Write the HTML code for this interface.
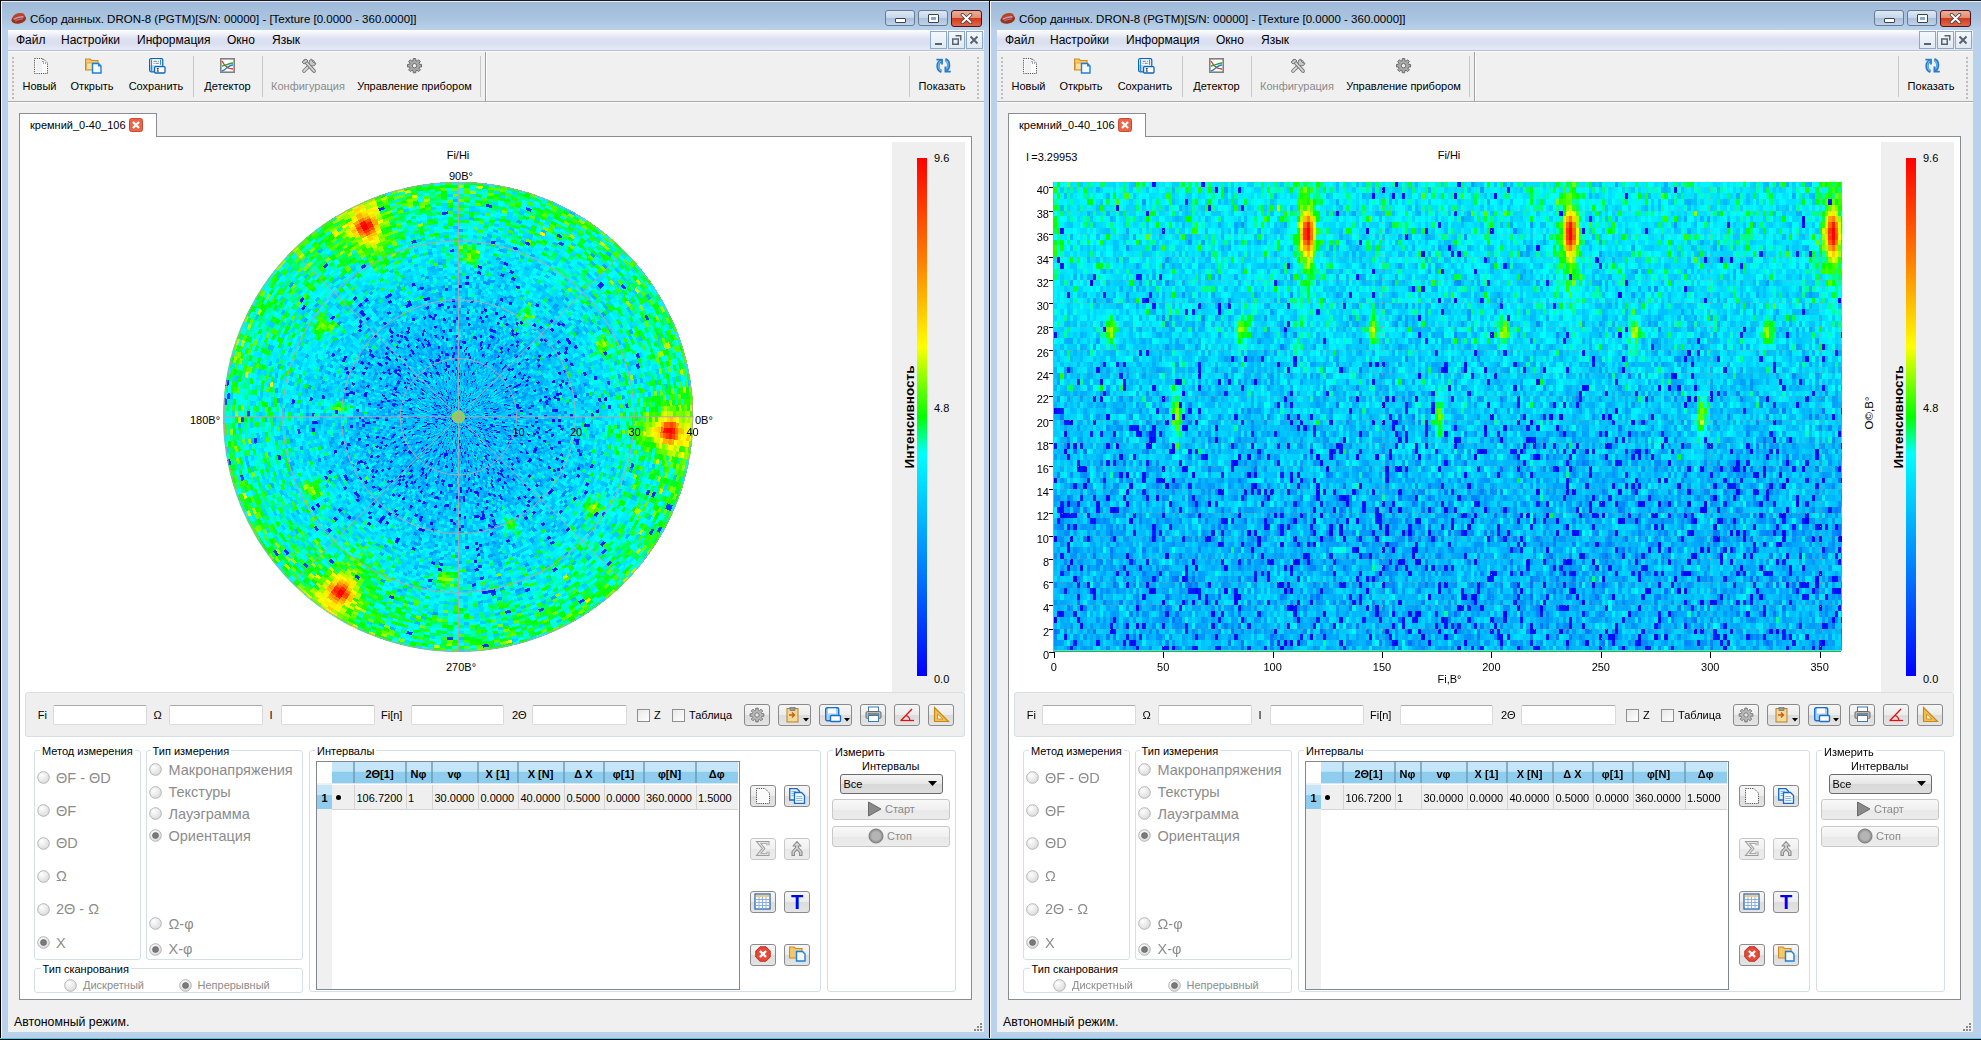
<!DOCTYPE html><html><head><meta charset="utf-8"><style>
*{margin:0;padding:0}
body{width:1981px;height:1040px;overflow:hidden;background:#000;font-family:"Liberation Sans", sans-serif;position:relative}
.win{position:absolute;top:0;width:992px;height:1040px;overflow:hidden}
.a{position:absolute}
.t{position:absolute;white-space:nowrap;line-height:1.15}
</style></head><body><div class="win" style="left:0px;">
<div class="a" style="left:0px;top:0px;width:992px;height:1040px;background:#b9d1ea;"></div>
<div class="a" style="left:0px;top:2px;width:992px;height:28px;background:linear-gradient(#9fbad8,#aac4e0 60%,#b9d1ea);"></div>
<div class="a" style="left:0px;top:0px;width:992px;height:1px;background:#1a1a1a;"></div>
<div class="a" style="left:0px;top:1px;width:992px;height:1px;background:#e8eef6;"></div>
<div class="a" style="left:0px;top:0px;width:1px;height:1040px;background:#000;"></div>
<div class="a" style="left:1px;top:1px;width:1px;height:1038px;background:#f4f8fc;"></div>
<div class="a" style="left:0px;top:1038px;width:992px;height:1px;background:#38d0f0;"></div>
<div class="a" style="left:0px;top:1039px;width:992px;height:1px;background:#000;"></div>
<svg class="a" style="left:10px;top:11px" width="17" height="14" viewBox="0 0 17 14"><g transform="rotate(-12 8.5 7)"><ellipse cx="8.5" cy="8.2" rx="7.4" ry="4.4" fill="#9a3216"/><ellipse cx="9" cy="5.8" rx="6.2" ry="3.6" fill="#b8442a"/><path d="M3.5 7.2 Q8.5 5.6 13.5 6.8" fill="none" stroke="#c8a0c0" stroke-width="1.3"/><path d="M4.5 9.2 Q8.5 8.2 12.5 9" fill="none" stroke="#a87098" stroke-width="1"/></g></svg>
<div class="t" style="left:30px;top:12.5px;font-size:11.5px;color:#000;letter-spacing:0px;">Сбор данных. DRON-8 (PGTM)[S/N: 00000] - [Texture [0.0000 - 360.0000]]</div>
<div class="a" style="left:885px;top:10px;width:30px;height:16px;border:1px solid #6a7a94;border-radius:3px;box-sizing:border-box;background:linear-gradient(#dde8f4 0%,#c6d7ea 50%,#a9c0da 51%,#c0d4ea 100%);"></div>
<div class="a" style="left:895px;top:18px;width:11px;height:5px;border:1.5px solid #3c4454;border-radius:1px;background:#fff;box-sizing:border-box;"></div>
<div class="a" style="left:918px;top:10px;width:30px;height:16px;border:1px solid #6a7a94;border-radius:3px;box-sizing:border-box;background:linear-gradient(#dde8f4 0%,#c6d7ea 50%,#a9c0da 51%,#c0d4ea 100%);"></div>
<div class="a" style="left:928px;top:14px;width:11px;height:9px;border:1.5px solid #3c4454;border-radius:1px;background:#fff;box-sizing:border-box;"></div>
<div class="a" style="left:931px;top:17px;width:5px;height:3px;background:#8aa8c8;"></div>
<div class="a" style="left:951px;top:10px;width:31px;height:17px;border:1px solid #50101c;border-radius:3px;box-sizing:border-box;background:linear-gradient(#eab098 0%,#e48e70 45%,#d23a1c 50%,#e06a4c 100%);"></div>
<svg class="a" style="left:960px;top:13px" width="13" height="11" viewBox="0 0 13 11"><path d="M2.5 1.8 L10.5 9.2 M10.5 1.8 L2.5 9.2" stroke="#3a3c48" stroke-width="3.6" stroke-linecap="round"/><path d="M2.5 1.8 L10.5 9.2 M10.5 1.8 L2.5 9.2" stroke="#fff" stroke-width="2" stroke-linecap="round"/></svg>
<div class="a" style="left:8px;top:30px;width:976px;height:1002px;background:#f0f0f0;"></div>
<div class="a" style="left:8px;top:30px;width:976px;height:20px;background:linear-gradient(#fefefe 0,#f6f7fb 12%,#dce0f0 45%,#dadff0 65%,#e6e9f5 100%);"></div>
<div class="a" style="left:8px;top:50px;width:976px;height:1px;background:#b8c0d2;"></div>
<div class="a" style="left:8px;top:51px;width:976px;height:1px;background:#fbfbfb;"></div>
<div class="t" style="left:16px;top:34px;font-size:12px;color:#000;">Файл</div>
<div class="t" style="left:61px;top:34px;font-size:12px;color:#000;">Настройки</div>
<div class="t" style="left:137px;top:34px;font-size:12px;color:#000;">Информация</div>
<div class="t" style="left:227px;top:34px;font-size:12px;color:#000;">Окно</div>
<div class="t" style="left:272px;top:34px;font-size:12px;color:#000;">Язык</div>
<div class="a" style="left:930px;top:31px;width:17px;height:18px;border:1px solid #8fa8c0;box-sizing:border-box;background:linear-gradient(#f4f8fc,#dfe9f4);"></div>
<div class="a" style="left:948px;top:31px;width:17px;height:18px;border:1px solid #8fa8c0;box-sizing:border-box;background:linear-gradient(#f4f8fc,#dfe9f4);"></div>
<div class="a" style="left:966px;top:31px;width:17px;height:18px;border:1px solid #8fa8c0;box-sizing:border-box;background:linear-gradient(#f4f8fc,#dfe9f4);"></div>
<div class="a" style="left:935px;top:43px;width:7px;height:2px;background:#5a6470;"></div>
<svg class="a" style="left:952px;top:35px" width="10" height="10" viewBox="0 0 10 10"><path d="M3.5 0.75 H8.75 V5.5 M0.75 4 H6.25 V9.25 H0.75 Z" fill="none" stroke="#5a6470" stroke-width="1.5"/></svg>
<svg class="a" style="left:969px;top:35px" width="10" height="10" viewBox="0 0 10 10"><path d="M1.5 1.5 L8.5 8.5 M8.5 1.5 L1.5 8.5" stroke="#5a6470" stroke-width="2"/></svg>
<div class="a" style="left:8px;top:52px;width:976px;height:49px;background:#f0f0f0;"></div>
<div class="a" style="left:8px;top:101px;width:976px;height:1px;background:#a9a9a9;"></div>
<div class="a" style="left:8px;top:102px;width:976px;height:1px;background:#fdfdfd;"></div>
<div class="a" style="left:485px;top:52px;width:1px;height:49px;background:#a0a0a0;"></div>
<div class="a" style="left:486px;top:52px;width:1px;height:49px;background:#fff;"></div>
<div class="a" style="left:12px;top:57px;width:2px;height:2px;background:#bdbdbd;"></div>
<div class="a" style="left:977px;top:57px;width:2px;height:2px;background:#bdbdbd;"></div>
<div class="a" style="left:12px;top:61px;width:2px;height:2px;background:#bdbdbd;"></div>
<div class="a" style="left:977px;top:61px;width:2px;height:2px;background:#bdbdbd;"></div>
<div class="a" style="left:12px;top:65px;width:2px;height:2px;background:#bdbdbd;"></div>
<div class="a" style="left:977px;top:65px;width:2px;height:2px;background:#bdbdbd;"></div>
<div class="a" style="left:12px;top:69px;width:2px;height:2px;background:#bdbdbd;"></div>
<div class="a" style="left:977px;top:69px;width:2px;height:2px;background:#bdbdbd;"></div>
<div class="a" style="left:12px;top:73px;width:2px;height:2px;background:#bdbdbd;"></div>
<div class="a" style="left:977px;top:73px;width:2px;height:2px;background:#bdbdbd;"></div>
<div class="a" style="left:12px;top:77px;width:2px;height:2px;background:#bdbdbd;"></div>
<div class="a" style="left:977px;top:77px;width:2px;height:2px;background:#bdbdbd;"></div>
<div class="a" style="left:12px;top:81px;width:2px;height:2px;background:#bdbdbd;"></div>
<div class="a" style="left:977px;top:81px;width:2px;height:2px;background:#bdbdbd;"></div>
<div class="a" style="left:12px;top:85px;width:2px;height:2px;background:#bdbdbd;"></div>
<div class="a" style="left:977px;top:85px;width:2px;height:2px;background:#bdbdbd;"></div>
<div class="a" style="left:12px;top:89px;width:2px;height:2px;background:#bdbdbd;"></div>
<div class="a" style="left:977px;top:89px;width:2px;height:2px;background:#bdbdbd;"></div>
<div class="a" style="left:12px;top:93px;width:2px;height:2px;background:#bdbdbd;"></div>
<div class="a" style="left:977px;top:93px;width:2px;height:2px;background:#bdbdbd;"></div>
<div class="a" style="left:12px;top:97px;width:2px;height:2px;background:#bdbdbd;"></div>
<div class="a" style="left:977px;top:97px;width:2px;height:2px;background:#bdbdbd;"></div>
<div class="a" style="left:193px;top:56px;width:1px;height:41px;background:#c8c8c8;"></div>
<div class="a" style="left:262px;top:56px;width:1px;height:41px;background:#c8c8c8;"></div>
<div class="a" style="left:480px;top:56px;width:1px;height:41px;background:#c8c8c8;"></div>
<div class="a" style="left:909px;top:56px;width:1px;height:41px;background:#c8c8c8;"></div>
<div class="t" style="left:-160.5px;width:400px;text-align:center;top:80px;font-size:11px;color:#000;">Новый</div>
<div class="t" style="left:-108px;width:400px;text-align:center;top:80px;font-size:11px;color:#000;">Открыть</div>
<div class="t" style="left:-44px;width:400px;text-align:center;top:80px;font-size:11px;color:#000;">Сохранить</div>
<div class="t" style="left:27.5px;width:400px;text-align:center;top:80px;font-size:11px;color:#000;">Детектор</div>
<div class="t" style="left:108px;width:400px;text-align:center;top:80px;font-size:11px;color:#8a8a8a;">Конфигурация</div>
<div class="t" style="left:214.5px;width:400px;text-align:center;top:80px;font-size:11px;color:#000;">Управление прибором</div>
<div class="t" style="left:742px;width:400px;text-align:center;top:80px;font-size:11px;color:#000;">Показать</div>
<svg class="a" style="left:34px;top:58px" width="14" height="16" viewBox="0 0 14 16"><path d="M0.5 0.5 H9 L13.5 5 V15.5 H0.5 Z" fill="#fbfbfb" stroke="#555" stroke-width="1" stroke-dasharray="1.2 1"/><rect x="2" y="2" width="6" height="12" fill="#e8ecf0" opacity="0.6"/><path d="M9 1 V5 H13" fill="none" stroke="#555" stroke-width="1" stroke-dasharray="1 1"/></svg><svg class="a" style="left:85px;top:58px" width="17" height="16" viewBox="0 0 17 16"><path d="M0.5 1 H5 L6.5 2.5 H13 V12 H0.5 Z" fill="#f2c86a" stroke="#d08a28" stroke-width="1.2"/><path d="M1.5 5 H12 V11.5 H1.5 Z" fill="#f8e2a0" stroke="#e0a040" stroke-width="0.8"/><path d="M7.5 5.5 H13.5 L16 8 V15 H7.5 Z" fill="#f4f8fc" stroke="#1a80e0" stroke-width="1.4"/><path d="M13 5.5 V8.5 H16" fill="#1a80e0"/></svg><svg class="a" style="left:149px;top:58px" width="17" height="16" viewBox="0 0 17 16"><rect x="0.6" y="0.6" width="13.2" height="13.2" rx="1.5" fill="#b8dcf6" stroke="#0a64b8" stroke-width="1.2"/><rect x="1.6" y="1.3" width="11" height="5.8" fill="#fff"/><path d="M2.6 1.5 V13 M11.4 1.5 V6.8" stroke="#1a80e0" stroke-width="1"/><path d="M4.5 3.3 H7.8 M8.8 3.3 H9.8 M4.5 5.3 H5.6 M6.6 5.3 H9.8" stroke="#555" stroke-width="0.8"/><rect x="5.6" y="8.6" width="10.4" height="6.4" rx="1" fill="#fff" stroke="#0a64b8" stroke-width="1.3"/><path d="M7.8 10.6 H9.8 M8.8 10.6 V13.2 M7.8 13.2 H9.8" stroke="#333" stroke-width="0.9"/></svg><svg class="a" style="left:220px;top:58px" width="15" height="15" viewBox="0 0 15 15"><rect x="0.8" y="0.8" width="13.4" height="13.4" fill="#fff" stroke="#808080" stroke-width="1.6"/><path d="M2 3 C5 9 8 11 13 11" fill="none" stroke="#e03020" stroke-width="1.3"/><path d="M2 8 C6 8 8 5 13 5" fill="none" stroke="#30a030" stroke-width="1.3"/><path d="M2 13 C6 12 8 7 13 7" fill="none" stroke="#2080d0" stroke-width="1.3"/></svg><svg class="a" style="left:301px;top:58px" width="16" height="16" viewBox="0 0 16 16"><path d="M3 13 L12 4" stroke="#7a7a7a" stroke-width="3.8" stroke-linecap="round"/><path d="M3 13 L12 4" stroke="#d8d8d8" stroke-width="1.8" stroke-linecap="round"/><path d="M4 3 L13 13" stroke="#7a7a7a" stroke-width="3.8" stroke-linecap="round"/><path d="M4 3 L13 13" stroke="#d8d8d8" stroke-width="1.8" stroke-linecap="round"/><path d="M1 4 L5 1 L7 3 L3 6 Z" fill="#c8c8c8" stroke="#7a7a7a"/><path d="M11 1 A3.5 3.5 0 1 0 15 5 L13 5 L11 3 Z" fill="#c8c8c8" stroke="#7a7a7a"/></svg><svg class="a" style="left:407px;top:58px" width="16" height="16" viewBox="0 0 16 16"><polygon points="12.51,6.31 14.59,6.46 14.59,8.94 12.51,9.09 12.02,10.26 13.39,11.84 11.64,13.59 10.06,12.22 8.89,12.71 8.74,14.79 6.26,14.79 6.11,12.71 4.94,12.22 3.36,13.59 1.61,11.84 2.98,10.26 2.49,9.09 0.41,8.94 0.41,6.46 2.49,6.31 2.98,5.14 1.61,3.56 3.36,1.81 4.94,3.18 6.11,2.69 6.26,0.61 8.74,0.61 8.89,2.69 10.06,3.18 11.64,1.81 13.39,3.56 12.02,5.14" fill="#a8a8a8" stroke="#6a6a6a" stroke-width="1"/><circle cx="7.5" cy="7.7" r="2.2" fill="#f0f0f0" stroke="#6a6a6a" stroke-width="1"/></svg><svg class="a" style="left:935px;top:57px" width="17" height="17" viewBox="0 0 17 17"><path d="M6.2 4 C1.8 5.5, 1.8 12.8, 6.6 14.6" fill="none" stroke="#2a7cc8" stroke-width="3.2"/><path d="M6.2 4 C2.6 5.5, 2.6 12.3, 6.6 13.8" fill="none" stroke="#6ab8f0" stroke-width="1.2"/><path d="M1.4 2.6 H7 V7.6" fill="none" stroke="#2a7cc8" stroke-width="1.8"/><path d="M10.2 2.6 C14.6 4, 15 11.5, 10.6 13.4" fill="none" stroke="#2a7cc8" stroke-width="3.2"/><path d="M10.2 3.4 C13.8 4.6, 14.2 11, 10.6 12.6" fill="none" stroke="#6ab8f0" stroke-width="1.2"/><path d="M10.4 9.6 V14.6 H15.8" fill="none" stroke="#2a7cc8" stroke-width="1.8"/></svg>
<div class="a" style="left:19px;top:113px;width:138px;height:24px;background:#fff;border:1px solid #898c95;border-bottom:none;box-sizing:border-box;"></div>
<div class="t" style="left:30px;top:119px;font-size:11px;color:#000;">кремний_0-40_106</div>
<svg class="a" style="left:129px;top:118px" width="14" height="14" viewBox="0 0 14 14"><rect x="0.5" y="0.5" width="13" height="13" rx="2" fill="#e8674a" stroke="#c84a30"/><path d="M4 4 L10 10 M10 4 L4 10" stroke="#fff" stroke-width="2.2"/></svg>
<div class="a" style="left:19px;top:136px;width:953px;height:864px;background:#fff;border:1px solid #898c95;box-sizing:border-box;"></div>
<div class="a" style="left:20px;top:136px;width:136px;height:1px;background:#fff;"></div>
<div class="a" style="left:892px;top:142px;width:73px;height:550px;background:#efefef;"></div>
<div class="a" style="left:917px;top:158px;width:10px;height:518px;background:linear-gradient(to top,#0000ff 0%,#0080ff 21%,#00ffff 43%,#00ff00 50%,#ffff00 63.5%,#ff8000 80%,#ff0000 100%);"></div>
<div class="t" style="left:934px;top:150.5px;font-size:11px;line-height:14px;color:#000;">9.6</div>
<div class="t" style="left:934px;top:401.0px;font-size:11px;line-height:14px;color:#000;">4.8</div>
<div class="t" style="left:934px;top:672.0px;font-size:11px;line-height:14px;color:#000;">0.0</div>
<div class="t" style="left:850px;top:410px;width:120px;text-align:center;font-size:13.5px;line-height:14px;font-weight:bold;transform:rotate(-90deg);">Интенсивность</div>
<div class="t" style="left:308px;width:300px;text-align:center;top:148.0px;font-size:11px;line-height:14px;color:#000;">Fi/Hi</div>
<div class="t" style="left:449px;top:169.0px;font-size:11px;line-height:14px;color:#000;">90В°</div>
<div class="t" style="left:190px;top:412.5px;font-size:11px;line-height:14px;color:#000;">180В°</div>
<div class="t" style="left:695px;top:413.0px;font-size:11px;line-height:14px;color:#000;">0В°</div>
<div class="t" style="left:446px;top:660.0px;font-size:11px;line-height:14px;color:#000;">270В°</div>
<div class="a" style="left:223.39999999999998px;top:181.8px;width:470px;height:470px;border-radius:50%;background:radial-gradient(circle closest-side,rgb(40,200,120) 0,rgb(6,162,251) 4%,rgb(3,164,253) 35%,rgb(2,193,245) 55%,rgb(8,227,199) 78%,rgb(40,232,160) 100%);"></div>
<div class="a" style="left:343px;top:206px;width:44px;height:44px;border-radius:50%;background:radial-gradient(circle closest-side,#ff2000 0,#ff8000 35%,#f0f000 60%,rgba(80,240,80,0.6) 80%,rgba(80,240,80,0) 100%);"></div>
<div class="a" style="left:645px;top:409px;width:44px;height:44px;border-radius:50%;background:radial-gradient(circle closest-side,#ff2000 0,#ff8000 35%,#f0f000 60%,rgba(80,240,80,0.6) 80%,rgba(80,240,80,0) 100%);"></div>
<div class="a" style="left:319px;top:570px;width:44px;height:44px;border-radius:50%;background:radial-gradient(circle closest-side,#ff2000 0,#ff8000 35%,#f0f000 60%,rgba(80,240,80,0.6) 80%,rgba(80,240,80,0) 100%);"></div>
<canvas id="cpolar" class="a" style="left:218px;top:177px" width="481" height="481"></canvas>
<svg class="a" style="left:218px;top:177px" width="481" height="481"><circle cx="240.39999999999998" cy="239.8" r="58.25" fill="none" stroke="#b2a6ac" stroke-width="1"/><circle cx="240.39999999999998" cy="239.8" r="117.0" fill="none" stroke="#b2a6ac" stroke-width="1"/><circle cx="240.39999999999998" cy="239.8" r="175.75" fill="none" stroke="#b2a6ac" stroke-width="1"/><circle cx="240.39999999999998" cy="239.8" r="234.5" fill="none" stroke="#b2a6ac" stroke-width="1"/><line x1="240.39999999999998" y1="239.8" x2="475.40" y2="239.80" stroke="#b2a6ac" stroke-width="1"/><line x1="240.39999999999998" y1="239.8" x2="406.57" y2="73.63" stroke="#b2a6ac" stroke-width="1"/><line x1="240.39999999999998" y1="239.8" x2="240.40" y2="4.80" stroke="#b2a6ac" stroke-width="1"/><line x1="240.39999999999998" y1="239.8" x2="74.23" y2="73.63" stroke="#b2a6ac" stroke-width="1"/><line x1="240.39999999999998" y1="239.8" x2="5.40" y2="239.80" stroke="#b2a6ac" stroke-width="1"/><line x1="240.39999999999998" y1="239.8" x2="74.23" y2="405.97" stroke="#b2a6ac" stroke-width="1"/><line x1="240.39999999999998" y1="239.8" x2="240.40" y2="474.80" stroke="#b2a6ac" stroke-width="1"/><line x1="240.39999999999998" y1="239.8" x2="406.57" y2="405.97" stroke="#b2a6ac" stroke-width="1"/></svg>
<div class="t" style="left:512.5px;top:425.0px;font-size:11px;line-height:14px;color:#000;">10</div>
<div class="t" style="left:570px;top:425.0px;font-size:11px;line-height:14px;color:#000;">20</div>
<div class="t" style="left:628.5px;top:425.0px;font-size:11px;line-height:14px;color:#000;">30</div>
<div class="t" style="left:686.5px;top:425.0px;font-size:11px;line-height:14px;color:#000;">40</div>
<div class="a" style="left:25px;top:692px;width:940px;height:45px;background:#efefef;border:1px solid #d5dfe5;border-radius:3px;box-sizing:border-box;"></div>
<div class="a" style="left:52.8px;top:705px;width:94.50000000000001px;height:19.5px;background:#fff;border:1px solid #dadada;border-top-color:#a8a8a8;border-radius:2px;box-sizing:border-box;"></div>
<div class="a" style="left:168.7px;top:705px;width:94.30000000000001px;height:19.5px;background:#fff;border:1px solid #dadada;border-top-color:#a8a8a8;border-radius:2px;box-sizing:border-box;"></div>
<div class="a" style="left:280.7px;top:705px;width:94.60000000000002px;height:19.5px;background:#fff;border:1px solid #dadada;border-top-color:#a8a8a8;border-radius:2px;box-sizing:border-box;"></div>
<div class="a" style="left:410.6px;top:705px;width:93.39999999999998px;height:19.5px;background:#fff;border:1px solid #dadada;border-top-color:#a8a8a8;border-radius:2px;box-sizing:border-box;"></div>
<div class="a" style="left:532px;top:705px;width:95.39999999999998px;height:19.5px;background:#fff;border:1px solid #dadada;border-top-color:#a8a8a8;border-radius:2px;box-sizing:border-box;"></div>
<div class="t" style="left:37.7px;top:708.0px;font-size:11px;line-height:14px;color:#000;">Fi</div>
<div class="t" style="left:153.5px;top:708.0px;font-size:11px;line-height:14px;color:#000;">Ω</div>
<div class="t" style="left:269.5px;top:708.0px;font-size:11px;line-height:14px;color:#000;">I</div>
<div class="t" style="left:381px;top:708.0px;font-size:11px;line-height:14px;color:#000;">Fi[n]</div>
<div class="t" style="left:512px;top:708.0px;font-size:11px;line-height:14px;color:#000;">2Θ</div>
<div class="t" style="left:654px;top:708.0px;font-size:11px;line-height:14px;color:#000;">Z</div>
<div class="t" style="left:689px;top:708.0px;font-size:11px;line-height:14px;color:#000;">Таблица</div>
<div class="a" style="left:637px;top:708.5px;width:13px;height:13px;background:linear-gradient(135deg,#e8e8e8,#fff);border:1px solid #8e8f8f;box-sizing:border-box;"></div>
<div class="a" style="left:672px;top:708.5px;width:13px;height:13px;background:linear-gradient(135deg,#e8e8e8,#fff);border:1px solid #8e8f8f;box-sizing:border-box;"></div>
<div class="a" style="left:743.6px;top:704px;width:26.0px;height:22px;border:1px solid #8a8a8a;border-radius:3px;box-sizing:border-box;background:linear-gradient(#f6f6f6,#ececec 50%,#dcdcdc 51%,#e4e4e4);"></div>
<div class="a" style="left:778px;top:704px;width:33px;height:22px;border:1px solid #8a8a8a;border-radius:3px;box-sizing:border-box;background:linear-gradient(#f6f6f6,#ececec 50%,#dcdcdc 51%,#e4e4e4);"></div>
<div class="a" style="left:819px;top:704px;width:33px;height:22px;border:1px solid #8a8a8a;border-radius:3px;box-sizing:border-box;background:linear-gradient(#f6f6f6,#ececec 50%,#dcdcdc 51%,#e4e4e4);"></div>
<div class="a" style="left:860px;top:704px;width:26px;height:22px;border:1px solid #8a8a8a;border-radius:3px;box-sizing:border-box;background:linear-gradient(#f6f6f6,#ececec 50%,#dcdcdc 51%,#e4e4e4);"></div>
<div class="a" style="left:894px;top:704px;width:26px;height:22px;border:1px solid #8a8a8a;border-radius:3px;box-sizing:border-box;background:linear-gradient(#f6f6f6,#ececec 50%,#dcdcdc 51%,#e4e4e4);"></div>
<div class="a" style="left:928px;top:704px;width:26px;height:22px;border:1px solid #8a8a8a;border-radius:3px;box-sizing:border-box;background:linear-gradient(#f6f6f6,#ececec 50%,#dcdcdc 51%,#e4e4e4);"></div>
<svg class="a" style="left:749px;top:707px" width="16" height="16" viewBox="0 0 16 16"><polygon points="12.82,6.67 14.90,6.80 14.90,9.20 12.82,9.33 12.35,10.46 13.73,12.03 12.03,13.73 10.46,12.35 9.33,12.82 9.20,14.90 6.80,14.90 6.67,12.82 5.54,12.35 3.97,13.73 2.27,12.03 3.65,10.46 3.18,9.33 1.10,9.20 1.10,6.80 3.18,6.67 3.65,5.54 2.27,3.97 3.97,2.27 5.54,3.65 6.67,3.18 6.80,1.10 9.20,1.10 9.33,3.18 10.46,3.65 12.03,2.27 13.73,3.97 12.35,5.54" fill="#b8b8b8" stroke="#7a7a7a" stroke-width="1"/><circle cx="8" cy="8" r="2.2" fill="#e8e8e8" stroke="#7a7a7a" stroke-width="1"/></svg>
<svg class="a" style="left:785px;top:707px" width="16" height="16" viewBox="0 0 16 16"><rect x="2" y="1.5" width="11" height="13.5" fill="#f2d89a" stroke="#b8822a"/><rect x="5" y="0.5" width="5" height="3" fill="#999" stroke="#666" stroke-width="0.6"/><path d="M4 8 H9 M7 5.5 L9.5 8 L7 10.5" stroke="#c86010" stroke-width="1.4" fill="none"/></svg>
<svg class="a" style="left:803px;top:718px" width="6" height="4" viewBox="0 0 6 4"><path d="M0 0 H6 L3 3.5 Z" fill="#000"/></svg>
<svg class="a" style="left:825px;top:707px" width="17" height="16" viewBox="0 0 17 16"><rect x="0.7" y="0.7" width="13" height="13" rx="1.5" fill="#a8d0f4" stroke="#1870c8" stroke-width="1.4"/><rect x="3" y="1.5" width="8" height="5" fill="#fff"/><rect x="5.5" y="8.5" width="10" height="6" rx="1" fill="#fff" stroke="#1870c8" stroke-width="1.4"/></svg>
<svg class="a" style="left:844px;top:718px" width="6" height="4" viewBox="0 0 6 4"><path d="M0 0 H6 L3 3.5 Z" fill="#000"/></svg>
<svg class="a" style="left:865px;top:706px" width="17" height="17" viewBox="0 0 17 17"><rect x="3.5" y="1" width="10" height="5" fill="#fff" stroke="#3a7ab8"/><rect x="1" y="5.5" width="15" height="7" rx="1.5" fill="#b8b8b8" stroke="#6a6a6a"/><rect x="3.5" y="9.5" width="10" height="6" fill="#fff" stroke="#3a7ab8"/><path d="M3 8 H14" stroke="#555"/></svg>
<svg class="a" style="left:899px;top:707px" width="17" height="16" viewBox="0 0 17 16"><path d="M1.5 13.5 H15" stroke="#e01010" stroke-width="1.3"/><path d="M2 13.5 L13 2" stroke="#e01010" stroke-width="1.3"/><path d="M7 8.5 A6 6 0 0 1 11 13.5" fill="none" stroke="#e01010" stroke-width="1.2"/></svg>
<svg class="a" style="left:933px;top:706px" width="17" height="17" viewBox="0 0 17 17"><path d="M1.5 1.5 L15.5 15.5 H1.5 Z" fill="#f2c050" stroke="#c88818" stroke-width="1.2"/><path d="M4.5 8 L10 13 H4.5 Z" fill="#f0f0f0" stroke="#c88818" stroke-width="0.8"/></svg>
<div class="a" style="left:34px;top:750px;width:107px;height:210px;border:1px solid #d5dfe5;border-radius:3px;box-sizing:border-box;"></div><div class="t" style="left:42px;top:744.0px;font-size:11px;line-height:14px;color:#000;background:#fff;padding:0 2px;margin-left:-2px;">Метод измерения</div>
<div class="a" style="left:146px;top:750px;width:157px;height:210px;border:1px solid #d5dfe5;border-radius:3px;box-sizing:border-box;"></div><div class="t" style="left:152.5px;top:744.0px;font-size:11px;line-height:14px;color:#000;background:#fff;padding:0 2px;margin-left:-2px;">Тип измерения</div>
<div class="a" style="left:34px;top:968px;width:269px;height:25px;border:1px solid #d5dfe5;border-radius:3px;box-sizing:border-box;"></div><div class="t" style="left:42.5px;top:962.0px;font-size:11px;line-height:14px;color:#000;background:#fff;padding:0 2px;margin-left:-2px;">Тип сканрования</div>
<svg class="a" style="left:36.5px;top:771.0px" width="13" height="13" viewBox="0 0 13 13"><defs><radialGradient id="rg" cx="0.35" cy="0.3" r="0.8"><stop offset="0" stop-color="#fff"/><stop offset="1" stop-color="#d8d8d8"/></radialGradient></defs><circle cx="6.5" cy="6.5" r="5.8" fill="url(#rg)" stroke="#b4b4b4" stroke-width="1"/></svg>
<div class="t" style="left:56px;top:770.5px;font-size:14.5px;line-height:14px;color:#8c8c8c;">ΘF - ΘD</div>
<svg class="a" style="left:36.5px;top:804.0px" width="13" height="13" viewBox="0 0 13 13"><defs><radialGradient id="rg" cx="0.35" cy="0.3" r="0.8"><stop offset="0" stop-color="#fff"/><stop offset="1" stop-color="#d8d8d8"/></radialGradient></defs><circle cx="6.5" cy="6.5" r="5.8" fill="url(#rg)" stroke="#b4b4b4" stroke-width="1"/></svg>
<div class="t" style="left:56px;top:803.5px;font-size:14.5px;line-height:14px;color:#8c8c8c;">ΘF</div>
<svg class="a" style="left:36.5px;top:836.5px" width="13" height="13" viewBox="0 0 13 13"><defs><radialGradient id="rg" cx="0.35" cy="0.3" r="0.8"><stop offset="0" stop-color="#fff"/><stop offset="1" stop-color="#d8d8d8"/></radialGradient></defs><circle cx="6.5" cy="6.5" r="5.8" fill="url(#rg)" stroke="#b4b4b4" stroke-width="1"/></svg>
<div class="t" style="left:56px;top:836.0px;font-size:14.5px;line-height:14px;color:#8c8c8c;">ΘD</div>
<svg class="a" style="left:36.5px;top:869.5px" width="13" height="13" viewBox="0 0 13 13"><defs><radialGradient id="rg" cx="0.35" cy="0.3" r="0.8"><stop offset="0" stop-color="#fff"/><stop offset="1" stop-color="#d8d8d8"/></radialGradient></defs><circle cx="6.5" cy="6.5" r="5.8" fill="url(#rg)" stroke="#b4b4b4" stroke-width="1"/></svg>
<div class="t" style="left:56px;top:869.0px;font-size:14.5px;line-height:14px;color:#8c8c8c;">Ω</div>
<svg class="a" style="left:36.5px;top:902.5px" width="13" height="13" viewBox="0 0 13 13"><defs><radialGradient id="rg" cx="0.35" cy="0.3" r="0.8"><stop offset="0" stop-color="#fff"/><stop offset="1" stop-color="#d8d8d8"/></radialGradient></defs><circle cx="6.5" cy="6.5" r="5.8" fill="url(#rg)" stroke="#b4b4b4" stroke-width="1"/></svg>
<div class="t" style="left:56px;top:902.0px;font-size:14.5px;line-height:14px;color:#8c8c8c;">2Θ - Ω</div>
<svg class="a" style="left:36.5px;top:936.0px" width="13" height="13" viewBox="0 0 13 13"><defs><radialGradient id="rg" cx="0.35" cy="0.3" r="0.8"><stop offset="0" stop-color="#fff"/><stop offset="1" stop-color="#d8d8d8"/></radialGradient></defs><circle cx="6.5" cy="6.5" r="5.8" fill="url(#rg)" stroke="#b4b4b4" stroke-width="1"/><circle cx="6.5" cy="6.5" r="3" fill="#7a7a7a" stroke="#5a5a5a" stroke-width="0.6"/></svg>
<div class="t" style="left:56px;top:935.5px;font-size:14.5px;line-height:14px;color:#8c8c8c;">Χ</div>
<svg class="a" style="left:148.5px;top:763.0px" width="13" height="13" viewBox="0 0 13 13"><defs><radialGradient id="rg" cx="0.35" cy="0.3" r="0.8"><stop offset="0" stop-color="#fff"/><stop offset="1" stop-color="#d8d8d8"/></radialGradient></defs><circle cx="6.5" cy="6.5" r="5.8" fill="url(#rg)" stroke="#b4b4b4" stroke-width="1"/></svg>
<div class="t" style="left:168.5px;top:762.5px;font-size:14.5px;line-height:14px;color:#8c8c8c;">Макронапряжения</div>
<svg class="a" style="left:148.5px;top:785.5px" width="13" height="13" viewBox="0 0 13 13"><defs><radialGradient id="rg" cx="0.35" cy="0.3" r="0.8"><stop offset="0" stop-color="#fff"/><stop offset="1" stop-color="#d8d8d8"/></radialGradient></defs><circle cx="6.5" cy="6.5" r="5.8" fill="url(#rg)" stroke="#b4b4b4" stroke-width="1"/></svg>
<div class="t" style="left:168.5px;top:785.0px;font-size:14.5px;line-height:14px;color:#8c8c8c;">Текстуры</div>
<svg class="a" style="left:148.5px;top:807.0px" width="13" height="13" viewBox="0 0 13 13"><defs><radialGradient id="rg" cx="0.35" cy="0.3" r="0.8"><stop offset="0" stop-color="#fff"/><stop offset="1" stop-color="#d8d8d8"/></radialGradient></defs><circle cx="6.5" cy="6.5" r="5.8" fill="url(#rg)" stroke="#b4b4b4" stroke-width="1"/></svg>
<div class="t" style="left:168.5px;top:806.5px;font-size:14.5px;line-height:14px;color:#8c8c8c;">Лауэграмма</div>
<svg class="a" style="left:148.5px;top:829.0px" width="13" height="13" viewBox="0 0 13 13"><defs><radialGradient id="rg" cx="0.35" cy="0.3" r="0.8"><stop offset="0" stop-color="#fff"/><stop offset="1" stop-color="#d8d8d8"/></radialGradient></defs><circle cx="6.5" cy="6.5" r="5.8" fill="url(#rg)" stroke="#b4b4b4" stroke-width="1"/><circle cx="6.5" cy="6.5" r="3" fill="#7a7a7a" stroke="#5a5a5a" stroke-width="0.6"/></svg>
<div class="t" style="left:168.5px;top:828.5px;font-size:14.5px;line-height:14px;color:#8c8c8c;">Ориентация</div>
<svg class="a" style="left:148.5px;top:917.0px" width="13" height="13" viewBox="0 0 13 13"><defs><radialGradient id="rg" cx="0.35" cy="0.3" r="0.8"><stop offset="0" stop-color="#fff"/><stop offset="1" stop-color="#d8d8d8"/></radialGradient></defs><circle cx="6.5" cy="6.5" r="5.8" fill="url(#rg)" stroke="#b4b4b4" stroke-width="1"/></svg>
<div class="t" style="left:168.5px;top:916.5px;font-size:14.5px;line-height:14px;color:#8c8c8c;">Ω-φ</div>
<svg class="a" style="left:148.5px;top:942.5px" width="13" height="13" viewBox="0 0 13 13"><defs><radialGradient id="rg" cx="0.35" cy="0.3" r="0.8"><stop offset="0" stop-color="#fff"/><stop offset="1" stop-color="#d8d8d8"/></radialGradient></defs><circle cx="6.5" cy="6.5" r="5.8" fill="url(#rg)" stroke="#b4b4b4" stroke-width="1"/><circle cx="6.5" cy="6.5" r="3" fill="#7a7a7a" stroke="#5a5a5a" stroke-width="0.6"/></svg>
<div class="t" style="left:168.5px;top:942.0px;font-size:14.5px;line-height:14px;color:#8c8c8c;">Χ-φ</div>
<svg class="a" style="left:63.5px;top:978.5px" width="13" height="13" viewBox="0 0 13 13"><defs><radialGradient id="rg" cx="0.35" cy="0.3" r="0.8"><stop offset="0" stop-color="#fff"/><stop offset="1" stop-color="#d8d8d8"/></radialGradient></defs><circle cx="6.5" cy="6.5" r="5.8" fill="url(#rg)" stroke="#b4b4b4" stroke-width="1"/></svg>
<div class="t" style="left:83px;top:978.0px;font-size:11px;line-height:14px;color:#8c8c8c;">Дискретный</div>
<svg class="a" style="left:178.5px;top:978.5px" width="13" height="13" viewBox="0 0 13 13"><defs><radialGradient id="rg" cx="0.35" cy="0.3" r="0.8"><stop offset="0" stop-color="#fff"/><stop offset="1" stop-color="#d8d8d8"/></radialGradient></defs><circle cx="6.5" cy="6.5" r="5.8" fill="url(#rg)" stroke="#b4b4b4" stroke-width="1"/><circle cx="6.5" cy="6.5" r="3" fill="#7a7a7a" stroke="#5a5a5a" stroke-width="0.6"/></svg>
<div class="t" style="left:197.5px;top:978.0px;font-size:11px;line-height:14px;color:#8c8c8c;">Непрерывный</div>
<div class="a" style="left:309px;top:750px;width:512px;height:242px;border:1px solid #d5dfe5;border-radius:3px;box-sizing:border-box;"></div><div class="t" style="left:317px;top:744.0px;font-size:11px;line-height:14px;color:#000;background:#fff;padding:0 2px;margin-left:-2px;">Интервалы</div>
<div class="a" style="left:316px;top:761px;width:424px;height:229px;background:#fff;border:1px solid #828790;box-sizing:border-box;"></div>
<div class="a" style="left:317px;top:762px;width:15px;height:227px;background:#f0f0f0;"></div>
<div class="a" style="left:317px;top:762px;width:15px;height:21px;background:#fff;"></div>
<div class="a" style="left:332px;top:762px;width:406px;height:21px;background:linear-gradient(#c4e6f8 0,#c4e6f8 45%,#8fcdee 46%,#8fcdee 100%);"></div>
<div class="a" style="left:352.5px;top:762px;width:2px;height:21px;background:#6e9bb8;opacity:0.75;"></div>
<div class="a" style="left:404.5px;top:762px;width:2px;height:21px;background:#6e9bb8;opacity:0.75;"></div>
<div class="a" style="left:430.5px;top:762px;width:2px;height:21px;background:#6e9bb8;opacity:0.75;"></div>
<div class="a" style="left:476.5px;top:762px;width:2px;height:21px;background:#6e9bb8;opacity:0.75;"></div>
<div class="a" style="left:516.5px;top:762px;width:2px;height:21px;background:#6e9bb8;opacity:0.75;"></div>
<div class="a" style="left:562.5px;top:762px;width:2px;height:21px;background:#6e9bb8;opacity:0.75;"></div>
<div class="a" style="left:602.5px;top:762px;width:2px;height:21px;background:#6e9bb8;opacity:0.75;"></div>
<div class="a" style="left:642.5px;top:762px;width:2px;height:21px;background:#6e9bb8;opacity:0.75;"></div>
<div class="a" style="left:694.5px;top:762px;width:2px;height:21px;background:#6e9bb8;opacity:0.75;"></div>
<div class="a" style="left:332px;top:783px;width:406px;height:1px;background:#d8e8f0;"></div>
<div class="t" style="left:229.5px;width:300px;text-align:center;top:767.0px;font-size:11px;line-height:14px;color:#000;font-weight:bold;">2Θ[1]</div>
<div class="t" style="left:268.5px;width:300px;text-align:center;top:767.0px;font-size:11px;line-height:14px;color:#000;font-weight:bold;">Nφ</div>
<div class="t" style="left:304.5px;width:300px;text-align:center;top:767.0px;font-size:11px;line-height:14px;color:#000;font-weight:bold;">vφ</div>
<div class="t" style="left:347.5px;width:300px;text-align:center;top:767.0px;font-size:11px;line-height:14px;color:#000;font-weight:bold;">Χ [1]</div>
<div class="t" style="left:390.5px;width:300px;text-align:center;top:767.0px;font-size:11px;line-height:14px;color:#000;font-weight:bold;">Χ [N]</div>
<div class="t" style="left:433.5px;width:300px;text-align:center;top:767.0px;font-size:11px;line-height:14px;color:#000;font-weight:bold;">Δ Χ</div>
<div class="t" style="left:473.5px;width:300px;text-align:center;top:767.0px;font-size:11px;line-height:14px;color:#000;font-weight:bold;">φ[1]</div>
<div class="t" style="left:519.5px;width:300px;text-align:center;top:767.0px;font-size:11px;line-height:14px;color:#000;font-weight:bold;">φ[N]</div>
<div class="t" style="left:566.75px;width:300px;text-align:center;top:767.0px;font-size:11px;line-height:14px;color:#000;font-weight:bold;">Δφ</div>
<div class="a" style="left:332px;top:785px;width:406px;height:24px;background:#efefef;"></div>
<div class="a" style="left:317px;top:785px;width:15px;height:24px;background:linear-gradient(#c4e6f8 0,#c4e6f8 40%,#8fcdee 41%,#8fcdee 100%);"></div>
<div class="t" style="left:174.5px;width:300px;text-align:center;top:790.5px;font-size:11px;line-height:14px;color:#000;font-weight:bold;">1</div>
<div class="a" style="left:353.5px;top:785px;width:1px;height:24px;background:#d4d4d4;"></div>
<div class="a" style="left:405.5px;top:785px;width:1px;height:24px;background:#d4d4d4;"></div>
<div class="a" style="left:431.5px;top:785px;width:1px;height:24px;background:#d4d4d4;"></div>
<div class="a" style="left:477.5px;top:785px;width:1px;height:24px;background:#d4d4d4;"></div>
<div class="a" style="left:517.5px;top:785px;width:1px;height:24px;background:#d4d4d4;"></div>
<div class="a" style="left:563.5px;top:785px;width:1px;height:24px;background:#d4d4d4;"></div>
<div class="a" style="left:603.5px;top:785px;width:1px;height:24px;background:#d4d4d4;"></div>
<div class="a" style="left:643.5px;top:785px;width:1px;height:24px;background:#d4d4d4;"></div>
<div class="a" style="left:695.5px;top:785px;width:1px;height:24px;background:#d4d4d4;"></div>
<div class="a" style="left:332px;top:808.5px;width:406px;height:1px;background:#d4d4d4;"></div>
<div class="a" style="left:335.5px;top:795px;width:5px;height:5px;background:#000;border-radius:50%;"></div>
<div class="t" style="left:356.5px;top:790.5px;font-size:11px;line-height:14px;color:#000;">106.7200</div>
<div class="t" style="left:408px;top:790.5px;font-size:11px;line-height:14px;color:#000;">1</div>
<div class="t" style="left:434.5px;top:790.5px;font-size:11px;line-height:14px;color:#000;">30.0000</div>
<div class="t" style="left:480.5px;top:790.5px;font-size:11px;line-height:14px;color:#000;">0.0000</div>
<div class="t" style="left:520.5px;top:790.5px;font-size:11px;line-height:14px;color:#000;">40.0000</div>
<div class="t" style="left:566.5px;top:790.5px;font-size:11px;line-height:14px;color:#000;">0.5000</div>
<div class="t" style="left:606.3px;top:790.5px;font-size:11px;line-height:14px;color:#000;">0.0000</div>
<div class="t" style="left:646px;top:790.5px;font-size:11px;line-height:14px;color:#000;">360.0000</div>
<div class="t" style="left:698px;top:790.5px;font-size:11px;line-height:14px;color:#000;">1.5000</div>
<div class="a" style="left:750px;top:785px;width:26px;height:22px;border:1px solid #8a8a8a;border-radius:3px;box-sizing:border-box;background:linear-gradient(#f6f6f6,#ececec 50%,#dcdcdc 51%,#e4e4e4);"></div>
<div class="a" style="left:784px;top:785px;width:26px;height:22px;border:1px solid #8a8a8a;border-radius:3px;box-sizing:border-box;background:linear-gradient(#f6f6f6,#ececec 50%,#dcdcdc 51%,#e4e4e4);"></div>
<div class="a" style="left:750px;top:838px;width:26px;height:22px;border:1px solid #c8c8c8;border-radius:3px;box-sizing:border-box;background:linear-gradient(#f8f8f8,#f0f0f0 50%,#e8e8e8 51%,#ececec);"></div>
<div class="a" style="left:784px;top:838px;width:26px;height:22px;border:1px solid #c8c8c8;border-radius:3px;box-sizing:border-box;background:linear-gradient(#f8f8f8,#f0f0f0 50%,#e8e8e8 51%,#ececec);"></div>
<div class="a" style="left:750px;top:891px;width:26px;height:22px;border:1px solid #8a8a8a;border-radius:3px;box-sizing:border-box;background:linear-gradient(#f6f6f6,#ececec 50%,#dcdcdc 51%,#e4e4e4);"></div>
<div class="a" style="left:784px;top:891px;width:26px;height:22px;border:1px solid #8a8a8a;border-radius:3px;box-sizing:border-box;background:linear-gradient(#f6f6f6,#ececec 50%,#dcdcdc 51%,#e4e4e4);"></div>
<div class="a" style="left:750px;top:944px;width:26px;height:22px;border:1px solid #8a8a8a;border-radius:3px;box-sizing:border-box;background:linear-gradient(#f6f6f6,#ececec 50%,#dcdcdc 51%,#e4e4e4);"></div>
<div class="a" style="left:784px;top:944px;width:26px;height:22px;border:1px solid #8a8a8a;border-radius:3px;box-sizing:border-box;background:linear-gradient(#f6f6f6,#ececec 50%,#dcdcdc 51%,#e4e4e4);"></div>
<svg class="a" style="left:756px;top:788px" width="14" height="16" viewBox="0 0 14 16"><path d="M0.5 0.5 H9 L13.5 5 V15.5 H0.5 Z" fill="#fbfbfb" stroke="#555" stroke-dasharray="1.2 1"/></svg>
<svg class="a" style="left:789px;top:788px" width="17" height="16" viewBox="0 0 17 16"><path d="M0.7 0.7 H8 L10.5 3.2 V12 H0.7 Z" fill="#e8f2fc" stroke="#1a6ac8" stroke-width="1.3"/><path d="M2.5 3.5 H7 M2.5 5.5 H8 M2.5 7.5 H8" stroke="#7ab0e8" stroke-width="0.9"/><path d="M5.5 4.5 H12.5 L15.5 7.5 V15.3 H5.5 Z" fill="#f4f8fc" stroke="#1a6ac8" stroke-width="1.3"/><path d="M7.3 8.5 H13 M7.3 10.5 H13.5 M7.3 12.5 H13.5" stroke="#7ab0e8" stroke-width="0.9"/></svg>
<svg class="a" style="left:755px;top:840px" width="16" height="17" viewBox="0 0 16 17"><path d="M13 5.2 V2.6 H3.6 L8.6 8.5 L3.6 14.4 H13 V11.8" fill="none" stroke="#9c9c9c" stroke-width="3" stroke-linejoin="miter"/><path d="M13 5.2 V2.6 H3.6 L8.6 8.5 L3.6 14.4 H13 V11.8" fill="none" stroke="#e4e4e4" stroke-width="1.1" stroke-linejoin="miter"/></svg>
<svg class="a" style="left:789px;top:840px" width="16" height="17" viewBox="0 0 16 17"><path d="M3 15.5 V11.5 L6.6 7.5 V6 H4 L8 1.5 L12 6 H9.4 V7.5 L13 11.5 V15.5 H10.6 V12.5 L8 9.6 L5.4 12.5 V15.5 Z" fill="#d4d4d4" stroke="#8a8a8a" stroke-width="1.1" stroke-linejoin="round"/></svg>
<svg class="a" style="left:754px;top:893px" width="17" height="17" viewBox="0 0 17 17"><rect x="1" y="1" width="15" height="15" fill="#fff" stroke="#2a6ab8" stroke-width="1.3"/><path d="M1.5 3 H15.5" stroke="#f0b040" stroke-width="1.4"/><path d="M1.5 6.5 H15.5 M1.5 9.5 H15.5 M1.5 12.5 H15.5 M5 4 V15.5 M8.5 4 V15.5 M12 4 V15.5" stroke="#80a8e0" stroke-width="0.9"/></svg>
<div class="t" style="left:647px;width:300px;text-align:center;top:895.0px;font-size:20px;line-height:14px;color:#0000e8;font-weight:bold;">T</div>
<svg class="a" style="left:755px;top:946px" width="16" height="16" viewBox="0 0 16 16"><path d="M5 0.8 H11 L15.2 5 V11 L11 15.2 H5 L0.8 11 V5 Z" fill="#e84a3a" stroke="#b82a20"/><path d="M5 5 L11 11 M11 5 L5 11" stroke="#fff" stroke-width="2.4"/></svg>
<svg class="a" style="left:789px;top:946px" width="17" height="16" viewBox="0 0 17 16"><path d="M0.5 1 H5 L6.5 2.5 H13 V12 H0.5 Z" fill="#f2c86a" stroke="#d08a28" stroke-width="1.2"/><path d="M7.5 5.5 H13.5 L16 8 V15 H7.5 Z" fill="#f4f8fc" stroke="#1a80e0" stroke-width="1.4"/></svg>
<div class="a" style="left:827px;top:750px;width:129px;height:242px;border:1px solid #d5dfe5;border-radius:3px;box-sizing:border-box;"></div><div class="t" style="left:835px;top:744.5px;font-size:11px;line-height:14px;color:#000;background:#fff;padding:0 2px;margin-left:-2px;">Измерить</div>
<div class="t" style="left:740.7px;width:300px;text-align:center;top:758.5px;font-size:11px;line-height:14px;color:#000;">Интервалы</div>
<div class="a" style="left:840px;top:774px;width:103px;height:20px;border:1px solid #6a6a6a;border-radius:3px;box-sizing:border-box;background:linear-gradient(#f6f6f6,#e6e6e6 50%,#d8d8d8 51%,#dedede);"></div>
<div class="t" style="left:843.5px;top:777.0px;font-size:11px;line-height:14px;color:#000;">Все</div>
<svg class="a" style="left:928px;top:781px" width="9" height="6" viewBox="0 0 9 6"><path d="M0 0 H9 L4.5 5 Z" fill="#000"/></svg>
<div class="a" style="left:832px;top:798.5px;width:118px;height:21px;border:1px solid #c8c8c8;border-radius:3px;box-sizing:border-box;background:linear-gradient(#f8f8f8,#f0f0f0 50%,#e8e8e8 51%,#ececec);"></div>
<svg class="a" style="left:867px;top:801px" width="15" height="16" viewBox="0 0 15 16"><path d="M1.5 1 L14 8 L1.5 15 Z" fill="#8a8a8a" stroke="#6a6a6a"/></svg>
<div class="t" style="left:885px;top:802.0px;font-size:11px;line-height:14px;color:#8a8a8a;">Старт</div>
<div class="a" style="left:832px;top:825.5px;width:118px;height:21px;border:1px solid #c8c8c8;border-radius:3px;box-sizing:border-box;background:linear-gradient(#f8f8f8,#f0f0f0 50%,#e8e8e8 51%,#ececec);"></div>
<svg class="a" style="left:868px;top:828px" width="16" height="16" viewBox="0 0 16 16"><circle cx="8" cy="8" r="7" fill="#9a9a9a" stroke="#7a7a7a"/><circle cx="8" cy="8" r="5" fill="#b4b4b4"/></svg>
<div class="t" style="left:887px;top:829.0px;font-size:11px;line-height:14px;color:#8a8a8a;">Стоп</div>
<div class="t" style="left:14px;top:1015px;font-size:12.3px;color:#000;">Автономный режим.</div>
<div class="a" style="left:980px;top:1023px;width:2px;height:2px;background:#8a8a8a;"></div>
<div class="a" style="left:977px;top:1026px;width:2px;height:2px;background:#8a8a8a;"></div>
<div class="a" style="left:980px;top:1026px;width:2px;height:2px;background:#8a8a8a;"></div>
<div class="a" style="left:974px;top:1029px;width:2px;height:2px;background:#8a8a8a;"></div>
<div class="a" style="left:977px;top:1029px;width:2px;height:2px;background:#8a8a8a;"></div>
<div class="a" style="left:980px;top:1029px;width:2px;height:2px;background:#8a8a8a;"></div>
</div><div class="win" style="left:989px;">
<div class="a" style="left:0px;top:0px;width:992px;height:1040px;background:#b9d1ea;"></div>
<div class="a" style="left:0px;top:2px;width:992px;height:28px;background:linear-gradient(#9fbad8,#aac4e0 60%,#b9d1ea);"></div>
<div class="a" style="left:0px;top:0px;width:992px;height:1px;background:#1a1a1a;"></div>
<div class="a" style="left:0px;top:1px;width:992px;height:1px;background:#e8eef6;"></div>
<div class="a" style="left:0px;top:0px;width:1px;height:1040px;background:#000;"></div>
<div class="a" style="left:1px;top:1px;width:1px;height:1038px;background:#f4f8fc;"></div>
<div class="a" style="left:0px;top:1038px;width:992px;height:1px;background:#38d0f0;"></div>
<div class="a" style="left:0px;top:1039px;width:992px;height:1px;background:#000;"></div>
<svg class="a" style="left:10px;top:11px" width="17" height="14" viewBox="0 0 17 14"><g transform="rotate(-12 8.5 7)"><ellipse cx="8.5" cy="8.2" rx="7.4" ry="4.4" fill="#9a3216"/><ellipse cx="9" cy="5.8" rx="6.2" ry="3.6" fill="#b8442a"/><path d="M3.5 7.2 Q8.5 5.6 13.5 6.8" fill="none" stroke="#c8a0c0" stroke-width="1.3"/><path d="M4.5 9.2 Q8.5 8.2 12.5 9" fill="none" stroke="#a87098" stroke-width="1"/></g></svg>
<div class="t" style="left:30px;top:12.5px;font-size:11.5px;color:#000;letter-spacing:0px;">Сбор данных. DRON-8 (PGTM)[S/N: 00000] - [Texture [0.0000 - 360.0000]]</div>
<div class="a" style="left:885px;top:10px;width:30px;height:16px;border:1px solid #6a7a94;border-radius:3px;box-sizing:border-box;background:linear-gradient(#dde8f4 0%,#c6d7ea 50%,#a9c0da 51%,#c0d4ea 100%);"></div>
<div class="a" style="left:895px;top:18px;width:11px;height:5px;border:1.5px solid #3c4454;border-radius:1px;background:#fff;box-sizing:border-box;"></div>
<div class="a" style="left:918px;top:10px;width:30px;height:16px;border:1px solid #6a7a94;border-radius:3px;box-sizing:border-box;background:linear-gradient(#dde8f4 0%,#c6d7ea 50%,#a9c0da 51%,#c0d4ea 100%);"></div>
<div class="a" style="left:928px;top:14px;width:11px;height:9px;border:1.5px solid #3c4454;border-radius:1px;background:#fff;box-sizing:border-box;"></div>
<div class="a" style="left:931px;top:17px;width:5px;height:3px;background:#8aa8c8;"></div>
<div class="a" style="left:951px;top:10px;width:31px;height:17px;border:1px solid #50101c;border-radius:3px;box-sizing:border-box;background:linear-gradient(#eab098 0%,#e48e70 45%,#d23a1c 50%,#e06a4c 100%);"></div>
<svg class="a" style="left:960px;top:13px" width="13" height="11" viewBox="0 0 13 11"><path d="M2.5 1.8 L10.5 9.2 M10.5 1.8 L2.5 9.2" stroke="#3a3c48" stroke-width="3.6" stroke-linecap="round"/><path d="M2.5 1.8 L10.5 9.2 M10.5 1.8 L2.5 9.2" stroke="#fff" stroke-width="2" stroke-linecap="round"/></svg>
<div class="a" style="left:8px;top:30px;width:976px;height:1002px;background:#f0f0f0;"></div>
<div class="a" style="left:8px;top:30px;width:976px;height:20px;background:linear-gradient(#fefefe 0,#f6f7fb 12%,#dce0f0 45%,#dadff0 65%,#e6e9f5 100%);"></div>
<div class="a" style="left:8px;top:50px;width:976px;height:1px;background:#b8c0d2;"></div>
<div class="a" style="left:8px;top:51px;width:976px;height:1px;background:#fbfbfb;"></div>
<div class="t" style="left:16px;top:34px;font-size:12px;color:#000;">Файл</div>
<div class="t" style="left:61px;top:34px;font-size:12px;color:#000;">Настройки</div>
<div class="t" style="left:137px;top:34px;font-size:12px;color:#000;">Информация</div>
<div class="t" style="left:227px;top:34px;font-size:12px;color:#000;">Окно</div>
<div class="t" style="left:272px;top:34px;font-size:12px;color:#000;">Язык</div>
<div class="a" style="left:930px;top:31px;width:17px;height:18px;border:1px solid #8fa8c0;box-sizing:border-box;background:linear-gradient(#f4f8fc,#dfe9f4);"></div>
<div class="a" style="left:948px;top:31px;width:17px;height:18px;border:1px solid #8fa8c0;box-sizing:border-box;background:linear-gradient(#f4f8fc,#dfe9f4);"></div>
<div class="a" style="left:966px;top:31px;width:17px;height:18px;border:1px solid #8fa8c0;box-sizing:border-box;background:linear-gradient(#f4f8fc,#dfe9f4);"></div>
<div class="a" style="left:935px;top:43px;width:7px;height:2px;background:#5a6470;"></div>
<svg class="a" style="left:952px;top:35px" width="10" height="10" viewBox="0 0 10 10"><path d="M3.5 0.75 H8.75 V5.5 M0.75 4 H6.25 V9.25 H0.75 Z" fill="none" stroke="#5a6470" stroke-width="1.5"/></svg>
<svg class="a" style="left:969px;top:35px" width="10" height="10" viewBox="0 0 10 10"><path d="M1.5 1.5 L8.5 8.5 M8.5 1.5 L1.5 8.5" stroke="#5a6470" stroke-width="2"/></svg>
<div class="a" style="left:8px;top:52px;width:976px;height:49px;background:#f0f0f0;"></div>
<div class="a" style="left:8px;top:101px;width:976px;height:1px;background:#a9a9a9;"></div>
<div class="a" style="left:8px;top:102px;width:976px;height:1px;background:#fdfdfd;"></div>
<div class="a" style="left:485px;top:52px;width:1px;height:49px;background:#a0a0a0;"></div>
<div class="a" style="left:486px;top:52px;width:1px;height:49px;background:#fff;"></div>
<div class="a" style="left:12px;top:57px;width:2px;height:2px;background:#bdbdbd;"></div>
<div class="a" style="left:977px;top:57px;width:2px;height:2px;background:#bdbdbd;"></div>
<div class="a" style="left:12px;top:61px;width:2px;height:2px;background:#bdbdbd;"></div>
<div class="a" style="left:977px;top:61px;width:2px;height:2px;background:#bdbdbd;"></div>
<div class="a" style="left:12px;top:65px;width:2px;height:2px;background:#bdbdbd;"></div>
<div class="a" style="left:977px;top:65px;width:2px;height:2px;background:#bdbdbd;"></div>
<div class="a" style="left:12px;top:69px;width:2px;height:2px;background:#bdbdbd;"></div>
<div class="a" style="left:977px;top:69px;width:2px;height:2px;background:#bdbdbd;"></div>
<div class="a" style="left:12px;top:73px;width:2px;height:2px;background:#bdbdbd;"></div>
<div class="a" style="left:977px;top:73px;width:2px;height:2px;background:#bdbdbd;"></div>
<div class="a" style="left:12px;top:77px;width:2px;height:2px;background:#bdbdbd;"></div>
<div class="a" style="left:977px;top:77px;width:2px;height:2px;background:#bdbdbd;"></div>
<div class="a" style="left:12px;top:81px;width:2px;height:2px;background:#bdbdbd;"></div>
<div class="a" style="left:977px;top:81px;width:2px;height:2px;background:#bdbdbd;"></div>
<div class="a" style="left:12px;top:85px;width:2px;height:2px;background:#bdbdbd;"></div>
<div class="a" style="left:977px;top:85px;width:2px;height:2px;background:#bdbdbd;"></div>
<div class="a" style="left:12px;top:89px;width:2px;height:2px;background:#bdbdbd;"></div>
<div class="a" style="left:977px;top:89px;width:2px;height:2px;background:#bdbdbd;"></div>
<div class="a" style="left:12px;top:93px;width:2px;height:2px;background:#bdbdbd;"></div>
<div class="a" style="left:977px;top:93px;width:2px;height:2px;background:#bdbdbd;"></div>
<div class="a" style="left:12px;top:97px;width:2px;height:2px;background:#bdbdbd;"></div>
<div class="a" style="left:977px;top:97px;width:2px;height:2px;background:#bdbdbd;"></div>
<div class="a" style="left:193px;top:56px;width:1px;height:41px;background:#c8c8c8;"></div>
<div class="a" style="left:262px;top:56px;width:1px;height:41px;background:#c8c8c8;"></div>
<div class="a" style="left:480px;top:56px;width:1px;height:41px;background:#c8c8c8;"></div>
<div class="a" style="left:909px;top:56px;width:1px;height:41px;background:#c8c8c8;"></div>
<div class="t" style="left:-160.5px;width:400px;text-align:center;top:80px;font-size:11px;color:#000;">Новый</div>
<div class="t" style="left:-108px;width:400px;text-align:center;top:80px;font-size:11px;color:#000;">Открыть</div>
<div class="t" style="left:-44px;width:400px;text-align:center;top:80px;font-size:11px;color:#000;">Сохранить</div>
<div class="t" style="left:27.5px;width:400px;text-align:center;top:80px;font-size:11px;color:#000;">Детектор</div>
<div class="t" style="left:108px;width:400px;text-align:center;top:80px;font-size:11px;color:#8a8a8a;">Конфигурация</div>
<div class="t" style="left:214.5px;width:400px;text-align:center;top:80px;font-size:11px;color:#000;">Управление прибором</div>
<div class="t" style="left:742px;width:400px;text-align:center;top:80px;font-size:11px;color:#000;">Показать</div>
<svg class="a" style="left:34px;top:58px" width="14" height="16" viewBox="0 0 14 16"><path d="M0.5 0.5 H9 L13.5 5 V15.5 H0.5 Z" fill="#fbfbfb" stroke="#555" stroke-width="1" stroke-dasharray="1.2 1"/><rect x="2" y="2" width="6" height="12" fill="#e8ecf0" opacity="0.6"/><path d="M9 1 V5 H13" fill="none" stroke="#555" stroke-width="1" stroke-dasharray="1 1"/></svg><svg class="a" style="left:85px;top:58px" width="17" height="16" viewBox="0 0 17 16"><path d="M0.5 1 H5 L6.5 2.5 H13 V12 H0.5 Z" fill="#f2c86a" stroke="#d08a28" stroke-width="1.2"/><path d="M1.5 5 H12 V11.5 H1.5 Z" fill="#f8e2a0" stroke="#e0a040" stroke-width="0.8"/><path d="M7.5 5.5 H13.5 L16 8 V15 H7.5 Z" fill="#f4f8fc" stroke="#1a80e0" stroke-width="1.4"/><path d="M13 5.5 V8.5 H16" fill="#1a80e0"/></svg><svg class="a" style="left:149px;top:58px" width="17" height="16" viewBox="0 0 17 16"><rect x="0.6" y="0.6" width="13.2" height="13.2" rx="1.5" fill="#b8dcf6" stroke="#0a64b8" stroke-width="1.2"/><rect x="1.6" y="1.3" width="11" height="5.8" fill="#fff"/><path d="M2.6 1.5 V13 M11.4 1.5 V6.8" stroke="#1a80e0" stroke-width="1"/><path d="M4.5 3.3 H7.8 M8.8 3.3 H9.8 M4.5 5.3 H5.6 M6.6 5.3 H9.8" stroke="#555" stroke-width="0.8"/><rect x="5.6" y="8.6" width="10.4" height="6.4" rx="1" fill="#fff" stroke="#0a64b8" stroke-width="1.3"/><path d="M7.8 10.6 H9.8 M8.8 10.6 V13.2 M7.8 13.2 H9.8" stroke="#333" stroke-width="0.9"/></svg><svg class="a" style="left:220px;top:58px" width="15" height="15" viewBox="0 0 15 15"><rect x="0.8" y="0.8" width="13.4" height="13.4" fill="#fff" stroke="#808080" stroke-width="1.6"/><path d="M2 3 C5 9 8 11 13 11" fill="none" stroke="#e03020" stroke-width="1.3"/><path d="M2 8 C6 8 8 5 13 5" fill="none" stroke="#30a030" stroke-width="1.3"/><path d="M2 13 C6 12 8 7 13 7" fill="none" stroke="#2080d0" stroke-width="1.3"/></svg><svg class="a" style="left:301px;top:58px" width="16" height="16" viewBox="0 0 16 16"><path d="M3 13 L12 4" stroke="#7a7a7a" stroke-width="3.8" stroke-linecap="round"/><path d="M3 13 L12 4" stroke="#d8d8d8" stroke-width="1.8" stroke-linecap="round"/><path d="M4 3 L13 13" stroke="#7a7a7a" stroke-width="3.8" stroke-linecap="round"/><path d="M4 3 L13 13" stroke="#d8d8d8" stroke-width="1.8" stroke-linecap="round"/><path d="M1 4 L5 1 L7 3 L3 6 Z" fill="#c8c8c8" stroke="#7a7a7a"/><path d="M11 1 A3.5 3.5 0 1 0 15 5 L13 5 L11 3 Z" fill="#c8c8c8" stroke="#7a7a7a"/></svg><svg class="a" style="left:407px;top:58px" width="16" height="16" viewBox="0 0 16 16"><polygon points="12.51,6.31 14.59,6.46 14.59,8.94 12.51,9.09 12.02,10.26 13.39,11.84 11.64,13.59 10.06,12.22 8.89,12.71 8.74,14.79 6.26,14.79 6.11,12.71 4.94,12.22 3.36,13.59 1.61,11.84 2.98,10.26 2.49,9.09 0.41,8.94 0.41,6.46 2.49,6.31 2.98,5.14 1.61,3.56 3.36,1.81 4.94,3.18 6.11,2.69 6.26,0.61 8.74,0.61 8.89,2.69 10.06,3.18 11.64,1.81 13.39,3.56 12.02,5.14" fill="#a8a8a8" stroke="#6a6a6a" stroke-width="1"/><circle cx="7.5" cy="7.7" r="2.2" fill="#f0f0f0" stroke="#6a6a6a" stroke-width="1"/></svg><svg class="a" style="left:935px;top:57px" width="17" height="17" viewBox="0 0 17 17"><path d="M6.2 4 C1.8 5.5, 1.8 12.8, 6.6 14.6" fill="none" stroke="#2a7cc8" stroke-width="3.2"/><path d="M6.2 4 C2.6 5.5, 2.6 12.3, 6.6 13.8" fill="none" stroke="#6ab8f0" stroke-width="1.2"/><path d="M1.4 2.6 H7 V7.6" fill="none" stroke="#2a7cc8" stroke-width="1.8"/><path d="M10.2 2.6 C14.6 4, 15 11.5, 10.6 13.4" fill="none" stroke="#2a7cc8" stroke-width="3.2"/><path d="M10.2 3.4 C13.8 4.6, 14.2 11, 10.6 12.6" fill="none" stroke="#6ab8f0" stroke-width="1.2"/><path d="M10.4 9.6 V14.6 H15.8" fill="none" stroke="#2a7cc8" stroke-width="1.8"/></svg>
<div class="a" style="left:19px;top:113px;width:138px;height:24px;background:#fff;border:1px solid #898c95;border-bottom:none;box-sizing:border-box;"></div>
<div class="t" style="left:30px;top:119px;font-size:11px;color:#000;">кремний_0-40_106</div>
<svg class="a" style="left:129px;top:118px" width="14" height="14" viewBox="0 0 14 14"><rect x="0.5" y="0.5" width="13" height="13" rx="2" fill="#e8674a" stroke="#c84a30"/><path d="M4 4 L10 10 M10 4 L4 10" stroke="#fff" stroke-width="2.2"/></svg>
<div class="a" style="left:19px;top:136px;width:953px;height:864px;background:#fff;border:1px solid #898c95;box-sizing:border-box;"></div>
<div class="a" style="left:20px;top:136px;width:136px;height:1px;background:#fff;"></div>
<div class="a" style="left:892px;top:142px;width:73px;height:550px;background:#efefef;"></div>
<div class="a" style="left:917px;top:158px;width:10px;height:518px;background:linear-gradient(to top,#0000ff 0%,#0080ff 21%,#00ffff 43%,#00ff00 50%,#ffff00 63.5%,#ff8000 80%,#ff0000 100%);"></div>
<div class="t" style="left:934px;top:150.5px;font-size:11px;line-height:14px;color:#000;">9.6</div>
<div class="t" style="left:934px;top:401.0px;font-size:11px;line-height:14px;color:#000;">4.8</div>
<div class="t" style="left:934px;top:672.0px;font-size:11px;line-height:14px;color:#000;">0.0</div>
<div class="t" style="left:850px;top:410px;width:120px;text-align:center;font-size:13.5px;line-height:14px;font-weight:bold;transform:rotate(-90deg);">Интенсивность</div>
<div class="t" style="left:37px;top:150.0px;font-size:11px;line-height:14px;color:#000;">I&#8201;=3.29953</div>
<div class="t" style="left:310px;width:300px;text-align:center;top:148.0px;font-size:11px;line-height:14px;color:#000;">Fi/Hi</div>
<div class="a" style="left:65px;top:182px;width:787px;height:470px;background:linear-gradient(rgb(8,230,208) 0%,rgb(16,222,211) 10%,rgb(5,215,233) 30%,rgb(2,192,247) 45%,rgb(1,169,253) 60%,rgb(1,162,254) 100%);"></div>
<div class="a" style="left:306px;top:178px;width:24px;height:100px;border-radius:50%;background:radial-gradient(closest-side,#ff2000 0,#ff8000 25%,#f0f000 45%,rgba(60,240,60,0.7) 70%,rgba(60,240,60,0) 100%);"></div>
<div class="a" style="left:568px;top:178px;width:24px;height:100px;border-radius:50%;background:radial-gradient(closest-side,#ff2000 0,#ff8000 25%,#f0f000 45%,rgba(60,240,60,0.7) 70%,rgba(60,240,60,0) 100%);"></div>
<div class="a" style="left:831px;top:178px;width:24px;height:100px;border-radius:50%;background:radial-gradient(closest-side,#ff2000 0,#ff8000 25%,#f0f000 45%,rgba(60,240,60,0.7) 70%,rgba(60,240,60,0) 100%);"></div>
<canvas id="crect" class="a" style="left:59px;top:177px" width="800" height="490"></canvas>
<svg class="a" style="left:59px;top:177px" width="800" height="490"><line x1="13.8" y1="452.5" x2="793" y2="452.5" stroke="rgba(200,150,120,0.9)" stroke-width="1" stroke-dasharray="1 7"/><line x1="13.8" y1="428.5" x2="793" y2="428.5" stroke="rgba(200,150,120,0.9)" stroke-width="1" stroke-dasharray="1 7"/><line x1="13.8" y1="405.5" x2="793" y2="405.5" stroke="rgba(200,150,120,0.9)" stroke-width="1" stroke-dasharray="1 7"/><line x1="13.8" y1="382.5" x2="793" y2="382.5" stroke="rgba(200,150,120,0.9)" stroke-width="1" stroke-dasharray="1 7"/><line x1="13.8" y1="359.5" x2="793" y2="359.5" stroke="rgba(200,150,120,0.9)" stroke-width="1" stroke-dasharray="1 7"/><line x1="13.8" y1="336.5" x2="793" y2="336.5" stroke="rgba(200,150,120,0.9)" stroke-width="1" stroke-dasharray="1 7"/><line x1="13.8" y1="312.5" x2="793" y2="312.5" stroke="rgba(200,150,120,0.9)" stroke-width="1" stroke-dasharray="1 7"/><line x1="13.8" y1="289.5" x2="793" y2="289.5" stroke="rgba(200,150,120,0.9)" stroke-width="1" stroke-dasharray="1 7"/><line x1="13.8" y1="266.5" x2="793" y2="266.5" stroke="rgba(200,150,120,0.9)" stroke-width="1" stroke-dasharray="1 7"/><line x1="13.8" y1="243.5" x2="793" y2="243.5" stroke="rgba(200,150,120,0.9)" stroke-width="1" stroke-dasharray="1 7"/><line x1="13.8" y1="219.5" x2="793" y2="219.5" stroke="rgba(200,150,120,0.9)" stroke-width="1" stroke-dasharray="1 7"/><line x1="13.8" y1="196.5" x2="793" y2="196.5" stroke="rgba(200,150,120,0.9)" stroke-width="1" stroke-dasharray="1 7"/><line x1="13.8" y1="173.5" x2="793" y2="173.5" stroke="rgba(200,150,120,0.9)" stroke-width="1" stroke-dasharray="1 7"/><line x1="13.8" y1="150.5" x2="793" y2="150.5" stroke="rgba(200,150,120,0.9)" stroke-width="1" stroke-dasharray="1 7"/><line x1="13.8" y1="126.5" x2="793" y2="126.5" stroke="rgba(200,150,120,0.9)" stroke-width="1" stroke-dasharray="1 7"/><line x1="13.8" y1="103.5" x2="793" y2="103.5" stroke="rgba(200,150,120,0.9)" stroke-width="1" stroke-dasharray="1 7"/><line x1="13.8" y1="80.5" x2="793" y2="80.5" stroke="rgba(200,150,120,0.9)" stroke-width="1" stroke-dasharray="1 7"/><line x1="13.8" y1="57.5" x2="793" y2="57.5" stroke="rgba(200,150,120,0.9)" stroke-width="1" stroke-dasharray="1 7"/><line x1="13.8" y1="34.5" x2="793" y2="34.5" stroke="rgba(200,150,120,0.9)" stroke-width="1" stroke-dasharray="1 7"/><line x1="13.8" y1="10.5" x2="793" y2="10.5" stroke="rgba(200,150,120,0.9)" stroke-width="1" stroke-dasharray="1 7"/><line x1="115.5" y1="13" x2="115.5" y2="473" stroke="rgba(200,150,120,0.9)" stroke-width="1" stroke-dasharray="1 7"/><line x1="225.5" y1="13" x2="225.5" y2="473" stroke="rgba(200,150,120,0.9)" stroke-width="1" stroke-dasharray="1 7"/><line x1="334.5" y1="13" x2="334.5" y2="473" stroke="rgba(200,150,120,0.9)" stroke-width="1" stroke-dasharray="1 7"/><line x1="443.5" y1="13" x2="443.5" y2="473" stroke="rgba(200,150,120,0.9)" stroke-width="1" stroke-dasharray="1 7"/><line x1="553.5" y1="13" x2="553.5" y2="473" stroke="rgba(200,150,120,0.9)" stroke-width="1" stroke-dasharray="1 7"/><line x1="662.5" y1="13" x2="662.5" y2="473" stroke="rgba(200,150,120,0.9)" stroke-width="1" stroke-dasharray="1 7"/><line x1="772.5" y1="13" x2="772.5" y2="473" stroke="rgba(200,150,120,0.9)" stroke-width="1" stroke-dasharray="1 7"/><rect x="5" y="5" width="1" height="470" fill="#a0a0a0"/><rect x="1" y="475" width="4" height="1" fill="#000"/><rect x="1" y="452" width="4" height="1" fill="#000"/><rect x="1" y="428" width="4" height="1" fill="#000"/><rect x="1" y="405" width="4" height="1" fill="#000"/><rect x="1" y="382" width="4" height="1" fill="#000"/><rect x="1" y="359" width="4" height="1" fill="#000"/><rect x="1" y="336" width="4" height="1" fill="#000"/><rect x="1" y="312" width="4" height="1" fill="#000"/><rect x="1" y="289" width="4" height="1" fill="#000"/><rect x="1" y="266" width="4" height="1" fill="#000"/><rect x="1" y="243" width="4" height="1" fill="#000"/><rect x="1" y="219" width="4" height="1" fill="#000"/><rect x="1" y="196" width="4" height="1" fill="#000"/><rect x="1" y="173" width="4" height="1" fill="#000"/><rect x="1" y="150" width="4" height="1" fill="#000"/><rect x="1" y="126" width="4" height="1" fill="#000"/><rect x="1" y="103" width="4" height="1" fill="#000"/><rect x="1" y="80" width="4" height="1" fill="#000"/><rect x="1" y="57" width="4" height="1" fill="#000"/><rect x="1" y="34" width="4" height="1" fill="#000"/><rect x="1" y="10" width="4" height="1" fill="#000"/><rect x="6" y="475" width="1" height="6" fill="#000"/><rect x="115" y="475" width="1" height="6" fill="#000"/><rect x="225" y="475" width="1" height="6" fill="#000"/><rect x="334" y="475" width="1" height="6" fill="#000"/><rect x="443" y="475" width="1" height="6" fill="#000"/><rect x="553" y="475" width="1" height="6" fill="#000"/><rect x="662" y="475" width="1" height="6" fill="#000"/><rect x="772" y="475" width="1" height="6" fill="#000"/><rect x="1" y="475" width="5" height="1" fill="#000"/></svg>
<div class="t" style="left:-240px;width:300px;text-align:right;top:647.9px;font-size:11px;line-height:14px;color:#000;">0</div>
<div class="t" style="left:-240px;width:300px;text-align:right;top:624.67px;font-size:11px;line-height:14px;color:#000;">2</div>
<div class="t" style="left:-240px;width:300px;text-align:right;top:601.4399999999999px;font-size:11px;line-height:14px;color:#000;">4</div>
<div class="t" style="left:-240px;width:300px;text-align:right;top:578.21px;font-size:11px;line-height:14px;color:#000;">6</div>
<div class="t" style="left:-240px;width:300px;text-align:right;top:554.98px;font-size:11px;line-height:14px;color:#000;">8</div>
<div class="t" style="left:-240px;width:300px;text-align:right;top:531.75px;font-size:11px;line-height:14px;color:#000;">10</div>
<div class="t" style="left:-240px;width:300px;text-align:right;top:508.52px;font-size:11px;line-height:14px;color:#000;">12</div>
<div class="t" style="left:-240px;width:300px;text-align:right;top:485.28999999999996px;font-size:11px;line-height:14px;color:#000;">14</div>
<div class="t" style="left:-240px;width:300px;text-align:right;top:462.05999999999995px;font-size:11px;line-height:14px;color:#000;">16</div>
<div class="t" style="left:-240px;width:300px;text-align:right;top:438.83px;font-size:11px;line-height:14px;color:#000;">18</div>
<div class="t" style="left:-240px;width:300px;text-align:right;top:415.59999999999997px;font-size:11px;line-height:14px;color:#000;">20</div>
<div class="t" style="left:-240px;width:300px;text-align:right;top:392.37px;font-size:11px;line-height:14px;color:#000;">22</div>
<div class="t" style="left:-240px;width:300px;text-align:right;top:369.14px;font-size:11px;line-height:14px;color:#000;">24</div>
<div class="t" style="left:-240px;width:300px;text-align:right;top:345.90999999999997px;font-size:11px;line-height:14px;color:#000;">26</div>
<div class="t" style="left:-240px;width:300px;text-align:right;top:322.67999999999995px;font-size:11px;line-height:14px;color:#000;">28</div>
<div class="t" style="left:-240px;width:300px;text-align:right;top:299.45px;font-size:11px;line-height:14px;color:#000;">30</div>
<div class="t" style="left:-240px;width:300px;text-align:right;top:276.21999999999997px;font-size:11px;line-height:14px;color:#000;">32</div>
<div class="t" style="left:-240px;width:300px;text-align:right;top:252.98999999999995px;font-size:11px;line-height:14px;color:#000;">34</div>
<div class="t" style="left:-240px;width:300px;text-align:right;top:229.76px;font-size:11px;line-height:14px;color:#000;">36</div>
<div class="t" style="left:-240px;width:300px;text-align:right;top:206.52999999999997px;font-size:11px;line-height:14px;color:#000;">38</div>
<div class="t" style="left:-240px;width:300px;text-align:right;top:183.29999999999995px;font-size:11px;line-height:14px;color:#000;">40</div>
<div class="t" style="left:-85.20000000000005px;width:300px;text-align:center;top:660.0px;font-size:11px;line-height:14px;color:#000;">0</div>
<div class="t" style="left:24.202777777777783px;width:300px;text-align:center;top:660.0px;font-size:11px;line-height:14px;color:#000;">50</div>
<div class="t" style="left:133.60555555555538px;width:300px;text-align:center;top:660.0px;font-size:11px;line-height:14px;color:#000;">100</div>
<div class="t" style="left:243.0083333333332px;width:300px;text-align:center;top:660.0px;font-size:11px;line-height:14px;color:#000;">150</div>
<div class="t" style="left:352.41111111111104px;width:300px;text-align:center;top:660.0px;font-size:11px;line-height:14px;color:#000;">200</div>
<div class="t" style="left:461.81388888888887px;width:300px;text-align:center;top:660.0px;font-size:11px;line-height:14px;color:#000;">250</div>
<div class="t" style="left:571.2166666666667px;width:300px;text-align:center;top:660.0px;font-size:11px;line-height:14px;color:#000;">300</div>
<div class="t" style="left:680.6194444444445px;width:300px;text-align:center;top:660.0px;font-size:11px;line-height:14px;color:#000;">350</div>
<div class="t" style="left:310.5px;width:300px;text-align:center;top:672.0px;font-size:11px;line-height:14px;color:#000;">Fi,В°</div>
<div class="t" style="left:820px;top:406px;width:120px;text-align:center;font-size:11.5px;line-height:14px;transform:rotate(-90deg);">O©,В°</div>
<div class="a" style="left:25px;top:692px;width:940px;height:45px;background:#efefef;border:1px solid #d5dfe5;border-radius:3px;box-sizing:border-box;"></div>
<div class="a" style="left:52.8px;top:705px;width:94.50000000000001px;height:19.5px;background:#fff;border:1px solid #dadada;border-top-color:#a8a8a8;border-radius:2px;box-sizing:border-box;"></div>
<div class="a" style="left:168.7px;top:705px;width:94.30000000000001px;height:19.5px;background:#fff;border:1px solid #dadada;border-top-color:#a8a8a8;border-radius:2px;box-sizing:border-box;"></div>
<div class="a" style="left:280.7px;top:705px;width:94.60000000000002px;height:19.5px;background:#fff;border:1px solid #dadada;border-top-color:#a8a8a8;border-radius:2px;box-sizing:border-box;"></div>
<div class="a" style="left:410.6px;top:705px;width:93.39999999999998px;height:19.5px;background:#fff;border:1px solid #dadada;border-top-color:#a8a8a8;border-radius:2px;box-sizing:border-box;"></div>
<div class="a" style="left:532px;top:705px;width:95.39999999999998px;height:19.5px;background:#fff;border:1px solid #dadada;border-top-color:#a8a8a8;border-radius:2px;box-sizing:border-box;"></div>
<div class="t" style="left:37.7px;top:708.0px;font-size:11px;line-height:14px;color:#000;">Fi</div>
<div class="t" style="left:153.5px;top:708.0px;font-size:11px;line-height:14px;color:#000;">Ω</div>
<div class="t" style="left:269.5px;top:708.0px;font-size:11px;line-height:14px;color:#000;">I</div>
<div class="t" style="left:381px;top:708.0px;font-size:11px;line-height:14px;color:#000;">Fi[n]</div>
<div class="t" style="left:512px;top:708.0px;font-size:11px;line-height:14px;color:#000;">2Θ</div>
<div class="t" style="left:654px;top:708.0px;font-size:11px;line-height:14px;color:#000;">Z</div>
<div class="t" style="left:689px;top:708.0px;font-size:11px;line-height:14px;color:#000;">Таблица</div>
<div class="a" style="left:637px;top:708.5px;width:13px;height:13px;background:linear-gradient(135deg,#e8e8e8,#fff);border:1px solid #8e8f8f;box-sizing:border-box;"></div>
<div class="a" style="left:672px;top:708.5px;width:13px;height:13px;background:linear-gradient(135deg,#e8e8e8,#fff);border:1px solid #8e8f8f;box-sizing:border-box;"></div>
<div class="a" style="left:743.6px;top:704px;width:26.0px;height:22px;border:1px solid #8a8a8a;border-radius:3px;box-sizing:border-box;background:linear-gradient(#f6f6f6,#ececec 50%,#dcdcdc 51%,#e4e4e4);"></div>
<div class="a" style="left:778px;top:704px;width:33px;height:22px;border:1px solid #8a8a8a;border-radius:3px;box-sizing:border-box;background:linear-gradient(#f6f6f6,#ececec 50%,#dcdcdc 51%,#e4e4e4);"></div>
<div class="a" style="left:819px;top:704px;width:33px;height:22px;border:1px solid #8a8a8a;border-radius:3px;box-sizing:border-box;background:linear-gradient(#f6f6f6,#ececec 50%,#dcdcdc 51%,#e4e4e4);"></div>
<div class="a" style="left:860px;top:704px;width:26px;height:22px;border:1px solid #8a8a8a;border-radius:3px;box-sizing:border-box;background:linear-gradient(#f6f6f6,#ececec 50%,#dcdcdc 51%,#e4e4e4);"></div>
<div class="a" style="left:894px;top:704px;width:26px;height:22px;border:1px solid #8a8a8a;border-radius:3px;box-sizing:border-box;background:linear-gradient(#f6f6f6,#ececec 50%,#dcdcdc 51%,#e4e4e4);"></div>
<div class="a" style="left:928px;top:704px;width:26px;height:22px;border:1px solid #8a8a8a;border-radius:3px;box-sizing:border-box;background:linear-gradient(#f6f6f6,#ececec 50%,#dcdcdc 51%,#e4e4e4);"></div>
<svg class="a" style="left:749px;top:707px" width="16" height="16" viewBox="0 0 16 16"><polygon points="12.82,6.67 14.90,6.80 14.90,9.20 12.82,9.33 12.35,10.46 13.73,12.03 12.03,13.73 10.46,12.35 9.33,12.82 9.20,14.90 6.80,14.90 6.67,12.82 5.54,12.35 3.97,13.73 2.27,12.03 3.65,10.46 3.18,9.33 1.10,9.20 1.10,6.80 3.18,6.67 3.65,5.54 2.27,3.97 3.97,2.27 5.54,3.65 6.67,3.18 6.80,1.10 9.20,1.10 9.33,3.18 10.46,3.65 12.03,2.27 13.73,3.97 12.35,5.54" fill="#b8b8b8" stroke="#7a7a7a" stroke-width="1"/><circle cx="8" cy="8" r="2.2" fill="#e8e8e8" stroke="#7a7a7a" stroke-width="1"/></svg>
<svg class="a" style="left:785px;top:707px" width="16" height="16" viewBox="0 0 16 16"><rect x="2" y="1.5" width="11" height="13.5" fill="#f2d89a" stroke="#b8822a"/><rect x="5" y="0.5" width="5" height="3" fill="#999" stroke="#666" stroke-width="0.6"/><path d="M4 8 H9 M7 5.5 L9.5 8 L7 10.5" stroke="#c86010" stroke-width="1.4" fill="none"/></svg>
<svg class="a" style="left:803px;top:718px" width="6" height="4" viewBox="0 0 6 4"><path d="M0 0 H6 L3 3.5 Z" fill="#000"/></svg>
<svg class="a" style="left:825px;top:707px" width="17" height="16" viewBox="0 0 17 16"><rect x="0.7" y="0.7" width="13" height="13" rx="1.5" fill="#a8d0f4" stroke="#1870c8" stroke-width="1.4"/><rect x="3" y="1.5" width="8" height="5" fill="#fff"/><rect x="5.5" y="8.5" width="10" height="6" rx="1" fill="#fff" stroke="#1870c8" stroke-width="1.4"/></svg>
<svg class="a" style="left:844px;top:718px" width="6" height="4" viewBox="0 0 6 4"><path d="M0 0 H6 L3 3.5 Z" fill="#000"/></svg>
<svg class="a" style="left:865px;top:706px" width="17" height="17" viewBox="0 0 17 17"><rect x="3.5" y="1" width="10" height="5" fill="#fff" stroke="#3a7ab8"/><rect x="1" y="5.5" width="15" height="7" rx="1.5" fill="#b8b8b8" stroke="#6a6a6a"/><rect x="3.5" y="9.5" width="10" height="6" fill="#fff" stroke="#3a7ab8"/><path d="M3 8 H14" stroke="#555"/></svg>
<svg class="a" style="left:899px;top:707px" width="17" height="16" viewBox="0 0 17 16"><path d="M1.5 13.5 H15" stroke="#e01010" stroke-width="1.3"/><path d="M2 13.5 L13 2" stroke="#e01010" stroke-width="1.3"/><path d="M7 8.5 A6 6 0 0 1 11 13.5" fill="none" stroke="#e01010" stroke-width="1.2"/></svg>
<svg class="a" style="left:933px;top:706px" width="17" height="17" viewBox="0 0 17 17"><path d="M1.5 1.5 L15.5 15.5 H1.5 Z" fill="#f2c050" stroke="#c88818" stroke-width="1.2"/><path d="M4.5 8 L10 13 H4.5 Z" fill="#f0f0f0" stroke="#c88818" stroke-width="0.8"/></svg>
<div class="a" style="left:34px;top:750px;width:107px;height:210px;border:1px solid #d5dfe5;border-radius:3px;box-sizing:border-box;"></div><div class="t" style="left:42px;top:744.0px;font-size:11px;line-height:14px;color:#000;background:#fff;padding:0 2px;margin-left:-2px;">Метод измерения</div>
<div class="a" style="left:146px;top:750px;width:157px;height:210px;border:1px solid #d5dfe5;border-radius:3px;box-sizing:border-box;"></div><div class="t" style="left:152.5px;top:744.0px;font-size:11px;line-height:14px;color:#000;background:#fff;padding:0 2px;margin-left:-2px;">Тип измерения</div>
<div class="a" style="left:34px;top:968px;width:269px;height:25px;border:1px solid #d5dfe5;border-radius:3px;box-sizing:border-box;"></div><div class="t" style="left:42.5px;top:962.0px;font-size:11px;line-height:14px;color:#000;background:#fff;padding:0 2px;margin-left:-2px;">Тип сканрования</div>
<svg class="a" style="left:36.5px;top:771.0px" width="13" height="13" viewBox="0 0 13 13"><defs><radialGradient id="rg" cx="0.35" cy="0.3" r="0.8"><stop offset="0" stop-color="#fff"/><stop offset="1" stop-color="#d8d8d8"/></radialGradient></defs><circle cx="6.5" cy="6.5" r="5.8" fill="url(#rg)" stroke="#b4b4b4" stroke-width="1"/></svg>
<div class="t" style="left:56px;top:770.5px;font-size:14.5px;line-height:14px;color:#8c8c8c;">ΘF - ΘD</div>
<svg class="a" style="left:36.5px;top:804.0px" width="13" height="13" viewBox="0 0 13 13"><defs><radialGradient id="rg" cx="0.35" cy="0.3" r="0.8"><stop offset="0" stop-color="#fff"/><stop offset="1" stop-color="#d8d8d8"/></radialGradient></defs><circle cx="6.5" cy="6.5" r="5.8" fill="url(#rg)" stroke="#b4b4b4" stroke-width="1"/></svg>
<div class="t" style="left:56px;top:803.5px;font-size:14.5px;line-height:14px;color:#8c8c8c;">ΘF</div>
<svg class="a" style="left:36.5px;top:836.5px" width="13" height="13" viewBox="0 0 13 13"><defs><radialGradient id="rg" cx="0.35" cy="0.3" r="0.8"><stop offset="0" stop-color="#fff"/><stop offset="1" stop-color="#d8d8d8"/></radialGradient></defs><circle cx="6.5" cy="6.5" r="5.8" fill="url(#rg)" stroke="#b4b4b4" stroke-width="1"/></svg>
<div class="t" style="left:56px;top:836.0px;font-size:14.5px;line-height:14px;color:#8c8c8c;">ΘD</div>
<svg class="a" style="left:36.5px;top:869.5px" width="13" height="13" viewBox="0 0 13 13"><defs><radialGradient id="rg" cx="0.35" cy="0.3" r="0.8"><stop offset="0" stop-color="#fff"/><stop offset="1" stop-color="#d8d8d8"/></radialGradient></defs><circle cx="6.5" cy="6.5" r="5.8" fill="url(#rg)" stroke="#b4b4b4" stroke-width="1"/></svg>
<div class="t" style="left:56px;top:869.0px;font-size:14.5px;line-height:14px;color:#8c8c8c;">Ω</div>
<svg class="a" style="left:36.5px;top:902.5px" width="13" height="13" viewBox="0 0 13 13"><defs><radialGradient id="rg" cx="0.35" cy="0.3" r="0.8"><stop offset="0" stop-color="#fff"/><stop offset="1" stop-color="#d8d8d8"/></radialGradient></defs><circle cx="6.5" cy="6.5" r="5.8" fill="url(#rg)" stroke="#b4b4b4" stroke-width="1"/></svg>
<div class="t" style="left:56px;top:902.0px;font-size:14.5px;line-height:14px;color:#8c8c8c;">2Θ - Ω</div>
<svg class="a" style="left:36.5px;top:936.0px" width="13" height="13" viewBox="0 0 13 13"><defs><radialGradient id="rg" cx="0.35" cy="0.3" r="0.8"><stop offset="0" stop-color="#fff"/><stop offset="1" stop-color="#d8d8d8"/></radialGradient></defs><circle cx="6.5" cy="6.5" r="5.8" fill="url(#rg)" stroke="#b4b4b4" stroke-width="1"/><circle cx="6.5" cy="6.5" r="3" fill="#7a7a7a" stroke="#5a5a5a" stroke-width="0.6"/></svg>
<div class="t" style="left:56px;top:935.5px;font-size:14.5px;line-height:14px;color:#8c8c8c;">Χ</div>
<svg class="a" style="left:148.5px;top:763.0px" width="13" height="13" viewBox="0 0 13 13"><defs><radialGradient id="rg" cx="0.35" cy="0.3" r="0.8"><stop offset="0" stop-color="#fff"/><stop offset="1" stop-color="#d8d8d8"/></radialGradient></defs><circle cx="6.5" cy="6.5" r="5.8" fill="url(#rg)" stroke="#b4b4b4" stroke-width="1"/></svg>
<div class="t" style="left:168.5px;top:762.5px;font-size:14.5px;line-height:14px;color:#8c8c8c;">Макронапряжения</div>
<svg class="a" style="left:148.5px;top:785.5px" width="13" height="13" viewBox="0 0 13 13"><defs><radialGradient id="rg" cx="0.35" cy="0.3" r="0.8"><stop offset="0" stop-color="#fff"/><stop offset="1" stop-color="#d8d8d8"/></radialGradient></defs><circle cx="6.5" cy="6.5" r="5.8" fill="url(#rg)" stroke="#b4b4b4" stroke-width="1"/></svg>
<div class="t" style="left:168.5px;top:785.0px;font-size:14.5px;line-height:14px;color:#8c8c8c;">Текстуры</div>
<svg class="a" style="left:148.5px;top:807.0px" width="13" height="13" viewBox="0 0 13 13"><defs><radialGradient id="rg" cx="0.35" cy="0.3" r="0.8"><stop offset="0" stop-color="#fff"/><stop offset="1" stop-color="#d8d8d8"/></radialGradient></defs><circle cx="6.5" cy="6.5" r="5.8" fill="url(#rg)" stroke="#b4b4b4" stroke-width="1"/></svg>
<div class="t" style="left:168.5px;top:806.5px;font-size:14.5px;line-height:14px;color:#8c8c8c;">Лауэграмма</div>
<svg class="a" style="left:148.5px;top:829.0px" width="13" height="13" viewBox="0 0 13 13"><defs><radialGradient id="rg" cx="0.35" cy="0.3" r="0.8"><stop offset="0" stop-color="#fff"/><stop offset="1" stop-color="#d8d8d8"/></radialGradient></defs><circle cx="6.5" cy="6.5" r="5.8" fill="url(#rg)" stroke="#b4b4b4" stroke-width="1"/><circle cx="6.5" cy="6.5" r="3" fill="#7a7a7a" stroke="#5a5a5a" stroke-width="0.6"/></svg>
<div class="t" style="left:168.5px;top:828.5px;font-size:14.5px;line-height:14px;color:#8c8c8c;">Ориентация</div>
<svg class="a" style="left:148.5px;top:917.0px" width="13" height="13" viewBox="0 0 13 13"><defs><radialGradient id="rg" cx="0.35" cy="0.3" r="0.8"><stop offset="0" stop-color="#fff"/><stop offset="1" stop-color="#d8d8d8"/></radialGradient></defs><circle cx="6.5" cy="6.5" r="5.8" fill="url(#rg)" stroke="#b4b4b4" stroke-width="1"/></svg>
<div class="t" style="left:168.5px;top:916.5px;font-size:14.5px;line-height:14px;color:#8c8c8c;">Ω-φ</div>
<svg class="a" style="left:148.5px;top:942.5px" width="13" height="13" viewBox="0 0 13 13"><defs><radialGradient id="rg" cx="0.35" cy="0.3" r="0.8"><stop offset="0" stop-color="#fff"/><stop offset="1" stop-color="#d8d8d8"/></radialGradient></defs><circle cx="6.5" cy="6.5" r="5.8" fill="url(#rg)" stroke="#b4b4b4" stroke-width="1"/><circle cx="6.5" cy="6.5" r="3" fill="#7a7a7a" stroke="#5a5a5a" stroke-width="0.6"/></svg>
<div class="t" style="left:168.5px;top:942.0px;font-size:14.5px;line-height:14px;color:#8c8c8c;">Χ-φ</div>
<svg class="a" style="left:63.5px;top:978.5px" width="13" height="13" viewBox="0 0 13 13"><defs><radialGradient id="rg" cx="0.35" cy="0.3" r="0.8"><stop offset="0" stop-color="#fff"/><stop offset="1" stop-color="#d8d8d8"/></radialGradient></defs><circle cx="6.5" cy="6.5" r="5.8" fill="url(#rg)" stroke="#b4b4b4" stroke-width="1"/></svg>
<div class="t" style="left:83px;top:978.0px;font-size:11px;line-height:14px;color:#8c8c8c;">Дискретный</div>
<svg class="a" style="left:178.5px;top:978.5px" width="13" height="13" viewBox="0 0 13 13"><defs><radialGradient id="rg" cx="0.35" cy="0.3" r="0.8"><stop offset="0" stop-color="#fff"/><stop offset="1" stop-color="#d8d8d8"/></radialGradient></defs><circle cx="6.5" cy="6.5" r="5.8" fill="url(#rg)" stroke="#b4b4b4" stroke-width="1"/><circle cx="6.5" cy="6.5" r="3" fill="#7a7a7a" stroke="#5a5a5a" stroke-width="0.6"/></svg>
<div class="t" style="left:197.5px;top:978.0px;font-size:11px;line-height:14px;color:#8c8c8c;">Непрерывный</div>
<div class="a" style="left:309px;top:750px;width:512px;height:242px;border:1px solid #d5dfe5;border-radius:3px;box-sizing:border-box;"></div><div class="t" style="left:317px;top:744.0px;font-size:11px;line-height:14px;color:#000;background:#fff;padding:0 2px;margin-left:-2px;">Интервалы</div>
<div class="a" style="left:316px;top:761px;width:424px;height:229px;background:#fff;border:1px solid #828790;box-sizing:border-box;"></div>
<div class="a" style="left:317px;top:762px;width:15px;height:227px;background:#f0f0f0;"></div>
<div class="a" style="left:317px;top:762px;width:15px;height:21px;background:#fff;"></div>
<div class="a" style="left:332px;top:762px;width:406px;height:21px;background:linear-gradient(#c4e6f8 0,#c4e6f8 45%,#8fcdee 46%,#8fcdee 100%);"></div>
<div class="a" style="left:352.5px;top:762px;width:2px;height:21px;background:#6e9bb8;opacity:0.75;"></div>
<div class="a" style="left:404.5px;top:762px;width:2px;height:21px;background:#6e9bb8;opacity:0.75;"></div>
<div class="a" style="left:430.5px;top:762px;width:2px;height:21px;background:#6e9bb8;opacity:0.75;"></div>
<div class="a" style="left:476.5px;top:762px;width:2px;height:21px;background:#6e9bb8;opacity:0.75;"></div>
<div class="a" style="left:516.5px;top:762px;width:2px;height:21px;background:#6e9bb8;opacity:0.75;"></div>
<div class="a" style="left:562.5px;top:762px;width:2px;height:21px;background:#6e9bb8;opacity:0.75;"></div>
<div class="a" style="left:602.5px;top:762px;width:2px;height:21px;background:#6e9bb8;opacity:0.75;"></div>
<div class="a" style="left:642.5px;top:762px;width:2px;height:21px;background:#6e9bb8;opacity:0.75;"></div>
<div class="a" style="left:694.5px;top:762px;width:2px;height:21px;background:#6e9bb8;opacity:0.75;"></div>
<div class="a" style="left:332px;top:783px;width:406px;height:1px;background:#d8e8f0;"></div>
<div class="t" style="left:229.5px;width:300px;text-align:center;top:767.0px;font-size:11px;line-height:14px;color:#000;font-weight:bold;">2Θ[1]</div>
<div class="t" style="left:268.5px;width:300px;text-align:center;top:767.0px;font-size:11px;line-height:14px;color:#000;font-weight:bold;">Nφ</div>
<div class="t" style="left:304.5px;width:300px;text-align:center;top:767.0px;font-size:11px;line-height:14px;color:#000;font-weight:bold;">vφ</div>
<div class="t" style="left:347.5px;width:300px;text-align:center;top:767.0px;font-size:11px;line-height:14px;color:#000;font-weight:bold;">Χ [1]</div>
<div class="t" style="left:390.5px;width:300px;text-align:center;top:767.0px;font-size:11px;line-height:14px;color:#000;font-weight:bold;">Χ [N]</div>
<div class="t" style="left:433.5px;width:300px;text-align:center;top:767.0px;font-size:11px;line-height:14px;color:#000;font-weight:bold;">Δ Χ</div>
<div class="t" style="left:473.5px;width:300px;text-align:center;top:767.0px;font-size:11px;line-height:14px;color:#000;font-weight:bold;">φ[1]</div>
<div class="t" style="left:519.5px;width:300px;text-align:center;top:767.0px;font-size:11px;line-height:14px;color:#000;font-weight:bold;">φ[N]</div>
<div class="t" style="left:566.75px;width:300px;text-align:center;top:767.0px;font-size:11px;line-height:14px;color:#000;font-weight:bold;">Δφ</div>
<div class="a" style="left:332px;top:785px;width:406px;height:24px;background:#efefef;"></div>
<div class="a" style="left:317px;top:785px;width:15px;height:24px;background:linear-gradient(#c4e6f8 0,#c4e6f8 40%,#8fcdee 41%,#8fcdee 100%);"></div>
<div class="t" style="left:174.5px;width:300px;text-align:center;top:790.5px;font-size:11px;line-height:14px;color:#000;font-weight:bold;">1</div>
<div class="a" style="left:353.5px;top:785px;width:1px;height:24px;background:#d4d4d4;"></div>
<div class="a" style="left:405.5px;top:785px;width:1px;height:24px;background:#d4d4d4;"></div>
<div class="a" style="left:431.5px;top:785px;width:1px;height:24px;background:#d4d4d4;"></div>
<div class="a" style="left:477.5px;top:785px;width:1px;height:24px;background:#d4d4d4;"></div>
<div class="a" style="left:517.5px;top:785px;width:1px;height:24px;background:#d4d4d4;"></div>
<div class="a" style="left:563.5px;top:785px;width:1px;height:24px;background:#d4d4d4;"></div>
<div class="a" style="left:603.5px;top:785px;width:1px;height:24px;background:#d4d4d4;"></div>
<div class="a" style="left:643.5px;top:785px;width:1px;height:24px;background:#d4d4d4;"></div>
<div class="a" style="left:695.5px;top:785px;width:1px;height:24px;background:#d4d4d4;"></div>
<div class="a" style="left:332px;top:808.5px;width:406px;height:1px;background:#d4d4d4;"></div>
<div class="a" style="left:335.5px;top:795px;width:5px;height:5px;background:#000;border-radius:50%;"></div>
<div class="t" style="left:356.5px;top:790.5px;font-size:11px;line-height:14px;color:#000;">106.7200</div>
<div class="t" style="left:408px;top:790.5px;font-size:11px;line-height:14px;color:#000;">1</div>
<div class="t" style="left:434.5px;top:790.5px;font-size:11px;line-height:14px;color:#000;">30.0000</div>
<div class="t" style="left:480.5px;top:790.5px;font-size:11px;line-height:14px;color:#000;">0.0000</div>
<div class="t" style="left:520.5px;top:790.5px;font-size:11px;line-height:14px;color:#000;">40.0000</div>
<div class="t" style="left:566.5px;top:790.5px;font-size:11px;line-height:14px;color:#000;">0.5000</div>
<div class="t" style="left:606.3px;top:790.5px;font-size:11px;line-height:14px;color:#000;">0.0000</div>
<div class="t" style="left:646px;top:790.5px;font-size:11px;line-height:14px;color:#000;">360.0000</div>
<div class="t" style="left:698px;top:790.5px;font-size:11px;line-height:14px;color:#000;">1.5000</div>
<div class="a" style="left:750px;top:785px;width:26px;height:22px;border:1px solid #8a8a8a;border-radius:3px;box-sizing:border-box;background:linear-gradient(#f6f6f6,#ececec 50%,#dcdcdc 51%,#e4e4e4);"></div>
<div class="a" style="left:784px;top:785px;width:26px;height:22px;border:1px solid #8a8a8a;border-radius:3px;box-sizing:border-box;background:linear-gradient(#f6f6f6,#ececec 50%,#dcdcdc 51%,#e4e4e4);"></div>
<div class="a" style="left:750px;top:838px;width:26px;height:22px;border:1px solid #c8c8c8;border-radius:3px;box-sizing:border-box;background:linear-gradient(#f8f8f8,#f0f0f0 50%,#e8e8e8 51%,#ececec);"></div>
<div class="a" style="left:784px;top:838px;width:26px;height:22px;border:1px solid #c8c8c8;border-radius:3px;box-sizing:border-box;background:linear-gradient(#f8f8f8,#f0f0f0 50%,#e8e8e8 51%,#ececec);"></div>
<div class="a" style="left:750px;top:891px;width:26px;height:22px;border:1px solid #8a8a8a;border-radius:3px;box-sizing:border-box;background:linear-gradient(#f6f6f6,#ececec 50%,#dcdcdc 51%,#e4e4e4);"></div>
<div class="a" style="left:784px;top:891px;width:26px;height:22px;border:1px solid #8a8a8a;border-radius:3px;box-sizing:border-box;background:linear-gradient(#f6f6f6,#ececec 50%,#dcdcdc 51%,#e4e4e4);"></div>
<div class="a" style="left:750px;top:944px;width:26px;height:22px;border:1px solid #8a8a8a;border-radius:3px;box-sizing:border-box;background:linear-gradient(#f6f6f6,#ececec 50%,#dcdcdc 51%,#e4e4e4);"></div>
<div class="a" style="left:784px;top:944px;width:26px;height:22px;border:1px solid #8a8a8a;border-radius:3px;box-sizing:border-box;background:linear-gradient(#f6f6f6,#ececec 50%,#dcdcdc 51%,#e4e4e4);"></div>
<svg class="a" style="left:756px;top:788px" width="14" height="16" viewBox="0 0 14 16"><path d="M0.5 0.5 H9 L13.5 5 V15.5 H0.5 Z" fill="#fbfbfb" stroke="#555" stroke-dasharray="1.2 1"/></svg>
<svg class="a" style="left:789px;top:788px" width="17" height="16" viewBox="0 0 17 16"><path d="M0.7 0.7 H8 L10.5 3.2 V12 H0.7 Z" fill="#e8f2fc" stroke="#1a6ac8" stroke-width="1.3"/><path d="M2.5 3.5 H7 M2.5 5.5 H8 M2.5 7.5 H8" stroke="#7ab0e8" stroke-width="0.9"/><path d="M5.5 4.5 H12.5 L15.5 7.5 V15.3 H5.5 Z" fill="#f4f8fc" stroke="#1a6ac8" stroke-width="1.3"/><path d="M7.3 8.5 H13 M7.3 10.5 H13.5 M7.3 12.5 H13.5" stroke="#7ab0e8" stroke-width="0.9"/></svg>
<svg class="a" style="left:755px;top:840px" width="16" height="17" viewBox="0 0 16 17"><path d="M13 5.2 V2.6 H3.6 L8.6 8.5 L3.6 14.4 H13 V11.8" fill="none" stroke="#9c9c9c" stroke-width="3" stroke-linejoin="miter"/><path d="M13 5.2 V2.6 H3.6 L8.6 8.5 L3.6 14.4 H13 V11.8" fill="none" stroke="#e4e4e4" stroke-width="1.1" stroke-linejoin="miter"/></svg>
<svg class="a" style="left:789px;top:840px" width="16" height="17" viewBox="0 0 16 17"><path d="M3 15.5 V11.5 L6.6 7.5 V6 H4 L8 1.5 L12 6 H9.4 V7.5 L13 11.5 V15.5 H10.6 V12.5 L8 9.6 L5.4 12.5 V15.5 Z" fill="#d4d4d4" stroke="#8a8a8a" stroke-width="1.1" stroke-linejoin="round"/></svg>
<svg class="a" style="left:754px;top:893px" width="17" height="17" viewBox="0 0 17 17"><rect x="1" y="1" width="15" height="15" fill="#fff" stroke="#2a6ab8" stroke-width="1.3"/><path d="M1.5 3 H15.5" stroke="#f0b040" stroke-width="1.4"/><path d="M1.5 6.5 H15.5 M1.5 9.5 H15.5 M1.5 12.5 H15.5 M5 4 V15.5 M8.5 4 V15.5 M12 4 V15.5" stroke="#80a8e0" stroke-width="0.9"/></svg>
<div class="t" style="left:647px;width:300px;text-align:center;top:895.0px;font-size:20px;line-height:14px;color:#0000e8;font-weight:bold;">T</div>
<svg class="a" style="left:755px;top:946px" width="16" height="16" viewBox="0 0 16 16"><path d="M5 0.8 H11 L15.2 5 V11 L11 15.2 H5 L0.8 11 V5 Z" fill="#e84a3a" stroke="#b82a20"/><path d="M5 5 L11 11 M11 5 L5 11" stroke="#fff" stroke-width="2.4"/></svg>
<svg class="a" style="left:789px;top:946px" width="17" height="16" viewBox="0 0 17 16"><path d="M0.5 1 H5 L6.5 2.5 H13 V12 H0.5 Z" fill="#f2c86a" stroke="#d08a28" stroke-width="1.2"/><path d="M7.5 5.5 H13.5 L16 8 V15 H7.5 Z" fill="#f4f8fc" stroke="#1a80e0" stroke-width="1.4"/></svg>
<div class="a" style="left:827px;top:750px;width:129px;height:242px;border:1px solid #d5dfe5;border-radius:3px;box-sizing:border-box;"></div><div class="t" style="left:835px;top:744.5px;font-size:11px;line-height:14px;color:#000;background:#fff;padding:0 2px;margin-left:-2px;">Измерить</div>
<div class="t" style="left:740.7px;width:300px;text-align:center;top:758.5px;font-size:11px;line-height:14px;color:#000;">Интервалы</div>
<div class="a" style="left:840px;top:774px;width:103px;height:20px;border:1px solid #6a6a6a;border-radius:3px;box-sizing:border-box;background:linear-gradient(#f6f6f6,#e6e6e6 50%,#d8d8d8 51%,#dedede);"></div>
<div class="t" style="left:843.5px;top:777.0px;font-size:11px;line-height:14px;color:#000;">Все</div>
<svg class="a" style="left:928px;top:781px" width="9" height="6" viewBox="0 0 9 6"><path d="M0 0 H9 L4.5 5 Z" fill="#000"/></svg>
<div class="a" style="left:832px;top:798.5px;width:118px;height:21px;border:1px solid #c8c8c8;border-radius:3px;box-sizing:border-box;background:linear-gradient(#f8f8f8,#f0f0f0 50%,#e8e8e8 51%,#ececec);"></div>
<svg class="a" style="left:867px;top:801px" width="15" height="16" viewBox="0 0 15 16"><path d="M1.5 1 L14 8 L1.5 15 Z" fill="#8a8a8a" stroke="#6a6a6a"/></svg>
<div class="t" style="left:885px;top:802.0px;font-size:11px;line-height:14px;color:#8a8a8a;">Старт</div>
<div class="a" style="left:832px;top:825.5px;width:118px;height:21px;border:1px solid #c8c8c8;border-radius:3px;box-sizing:border-box;background:linear-gradient(#f8f8f8,#f0f0f0 50%,#e8e8e8 51%,#ececec);"></div>
<svg class="a" style="left:868px;top:828px" width="16" height="16" viewBox="0 0 16 16"><circle cx="8" cy="8" r="7" fill="#9a9a9a" stroke="#7a7a7a"/><circle cx="8" cy="8" r="5" fill="#b4b4b4"/></svg>
<div class="t" style="left:887px;top:829.0px;font-size:11px;line-height:14px;color:#8a8a8a;">Стоп</div>
<div class="t" style="left:14px;top:1015px;font-size:12.3px;color:#000;">Автономный режим.</div>
<div class="a" style="left:980px;top:1023px;width:2px;height:2px;background:#8a8a8a;"></div>
<div class="a" style="left:977px;top:1026px;width:2px;height:2px;background:#8a8a8a;"></div>
<div class="a" style="left:980px;top:1026px;width:2px;height:2px;background:#8a8a8a;"></div>
<div class="a" style="left:974px;top:1029px;width:2px;height:2px;background:#8a8a8a;"></div>
<div class="a" style="left:977px;top:1029px;width:2px;height:2px;background:#8a8a8a;"></div>
<div class="a" style="left:980px;top:1029px;width:2px;height:2px;background:#8a8a8a;"></div>
</div>
<script>
(function(){
var s=123456789;
function rnd(){ s^=s<<13; s>>>=0; s^=s>>>17; s^=s<<5; s>>>=0; return s/4294967296; }
function gauss(){ var u=rnd()||1e-9,v=rnd(); return Math.sqrt(-2*Math.log(u))*Math.cos(6.2832*v); }
var NI=82, NJ=240;
function genV(sd0, sd1, pd0, pd1, pol){
var V=[];
function base(chi){ if(chi<12) return 2.9; if(chi<26) return 2.9+0.5*(chi-12)/14; return 3.4+0.5*(chi-26)/14; }
function pdark(chi){ if(chi<14) return pd0; if(chi<28) return pd0-(pd0-pd1)*(chi-14)/14; return pd1; }
for(var i=0;i<NI;i++){ var row=[]; var chi=i*0.5+0.25;
  for(var j=0;j<NJ;j++){ var phi=j*1.5+0.75; var pk=0;
    var pp=[116,236,356];
    for(var k=0;k<3;k++){ var dp=Math.abs(phi-pp[k]); if(dp>180)dp=360-dp; var dc=chi-36.1; if(dc<0) dc*=0.8;
      pk += (pol?2.6:3.8)*Math.exp(-((dp/2.2)*(dp/2.2)+(dc/(pol?0.75:0.95))*(dc/(pol?0.75:0.95)))/2) + (pol?2.5:3.0)*Math.exp(-Math.sqrt((dp/3.0)*(dp/3.0)+(dc/3.2)*(dc/3.2))) + (pol?1.2*Math.exp(-Math.sqrt((dp/6)*(dp/6)+(dc/4.5)*(dc/4.5))):0); }
    var p2=[26,86,146,206,266,326];
    for(var k=0;k<6;k++){ var dp=Math.abs(phi-p2[k]); if(dp>180)dp=360-dp; var dc=chi-27.6;
      pk += (pol?1.7:2.25)*Math.exp(-((dp/(pol?2.6:2.0))*(dp/(pol?2.6:2.0))+(dc/(pol?1.2:0.8))*(dc/(pol?1.2:0.8)))/2); }
    var p3=[56,176,296];
    for(var k=0;k<3;k++){ var dp=Math.abs(phi-p3[k]); if(dp>180)dp=360-dp; var dc=chi-20.3;
      pk += (pol?1.7:2.3)*Math.exp(-((dp/(pol?2.2:1.8))*(dp/(pol?2.2:1.8))+(dc/1.5)*(dc/1.5))/2); }
    var att = Math.max(0, 1-pk/2.5);
    var v;
    if(rnd()<pdark(chi)*att){ v = rnd()*0.5; } else { v = Math.max(1.8, base(chi) + gauss()*(sd0+(sd1-sd0)*chi/40)*(0.3+0.7*att)) + pk; }
    row.push(Math.max(0,Math.min(9.6,v)));
  } V.push(row); }
return V;
}
var VR=genV(0.5,0.5,0.12,0.02,false);
var VP=genV(0.5,0.55,0.105,0.012,true);
var stops=[[0,0,0,255],[0.21,0,128,255],[0.43,0,255,255],[0.5,0,255,0],[0.635,255,255,0],[0.8,255,128,0],[1,255,0,0]];
function cmap(v){ var t=v/9.6; if(t<=0) return stops[0].slice(1); if(t>=1) return stops[stops.length-1].slice(1);
  for(var k=1;k<stops.length;k++){ if(t<=stops[k][0]){ var a=stops[k-1],b=stops[k]; var f=(t-a[0])/(b[0]-a[0]);
    return [a[1]+(b[1]-a[1])*f, a[2]+(b[2]-a[2])*f, a[3]+(b[3]-a[3])*f]; } } }
function draw(id, ox, fn, after){
  var c=document.getElementById(id); if(!c) return; var ctx=c.getContext('2d');
  var W=c.width,H=c.height; var img=ctx.createImageData(W,H); var d=img.data;
  for(var y=0;y<H;y++) for(var x=0;x<W;x++){ var r=fn(x+ox[0]+0.5,y+ox[1]+0.5); if(!r) continue; var p=(y*W+x)*4; d[p]=r[0];d[p+1]=r[1];d[p+2]=r[2];d[p+3]=255; }
  ctx.putImageData(img,0,0); if(after) after(ctx);
}
var CX=458.4, CY=416.8, R=235;
draw('cpolar',[218,177],function(x,y){ var dx=x-CX, dy=CY-y; var r=Math.sqrt(dx*dx+dy*dy); if(r>R) return null;
  if(r<6.5) return [130,220,60];
  var chi=r/R*40; var i=Math.floor(chi/0.5); var ph=Math.atan2(dy,dx)*57.29578; if(ph<0) ph+=360; var j=Math.floor(ph/1.5)%NJ;
  var bb=0.12+(chi>16?0.62*(chi-16)*(chi-16)/576:0); return cmap(VP[i][j]+bb); });
var X0=1053.8, XW=787.7, YB=651.9, PY=11.615;
draw('crect',[989+59,177],function(x,y){ if(x<X0||x>1841.5||y<182.4||y>651.4) return null;
  if(y>650) return [120,240,40];
  var phi=(x-X0)/XW*360; var chi=(YB-y)/PY; var i=Math.max(0,Math.min(NI-1,Math.floor(chi/0.5))); var j=Math.floor(phi/1.5)%NJ; return cmap(VR[i][j]); });
})();
</script>
</body></html>
